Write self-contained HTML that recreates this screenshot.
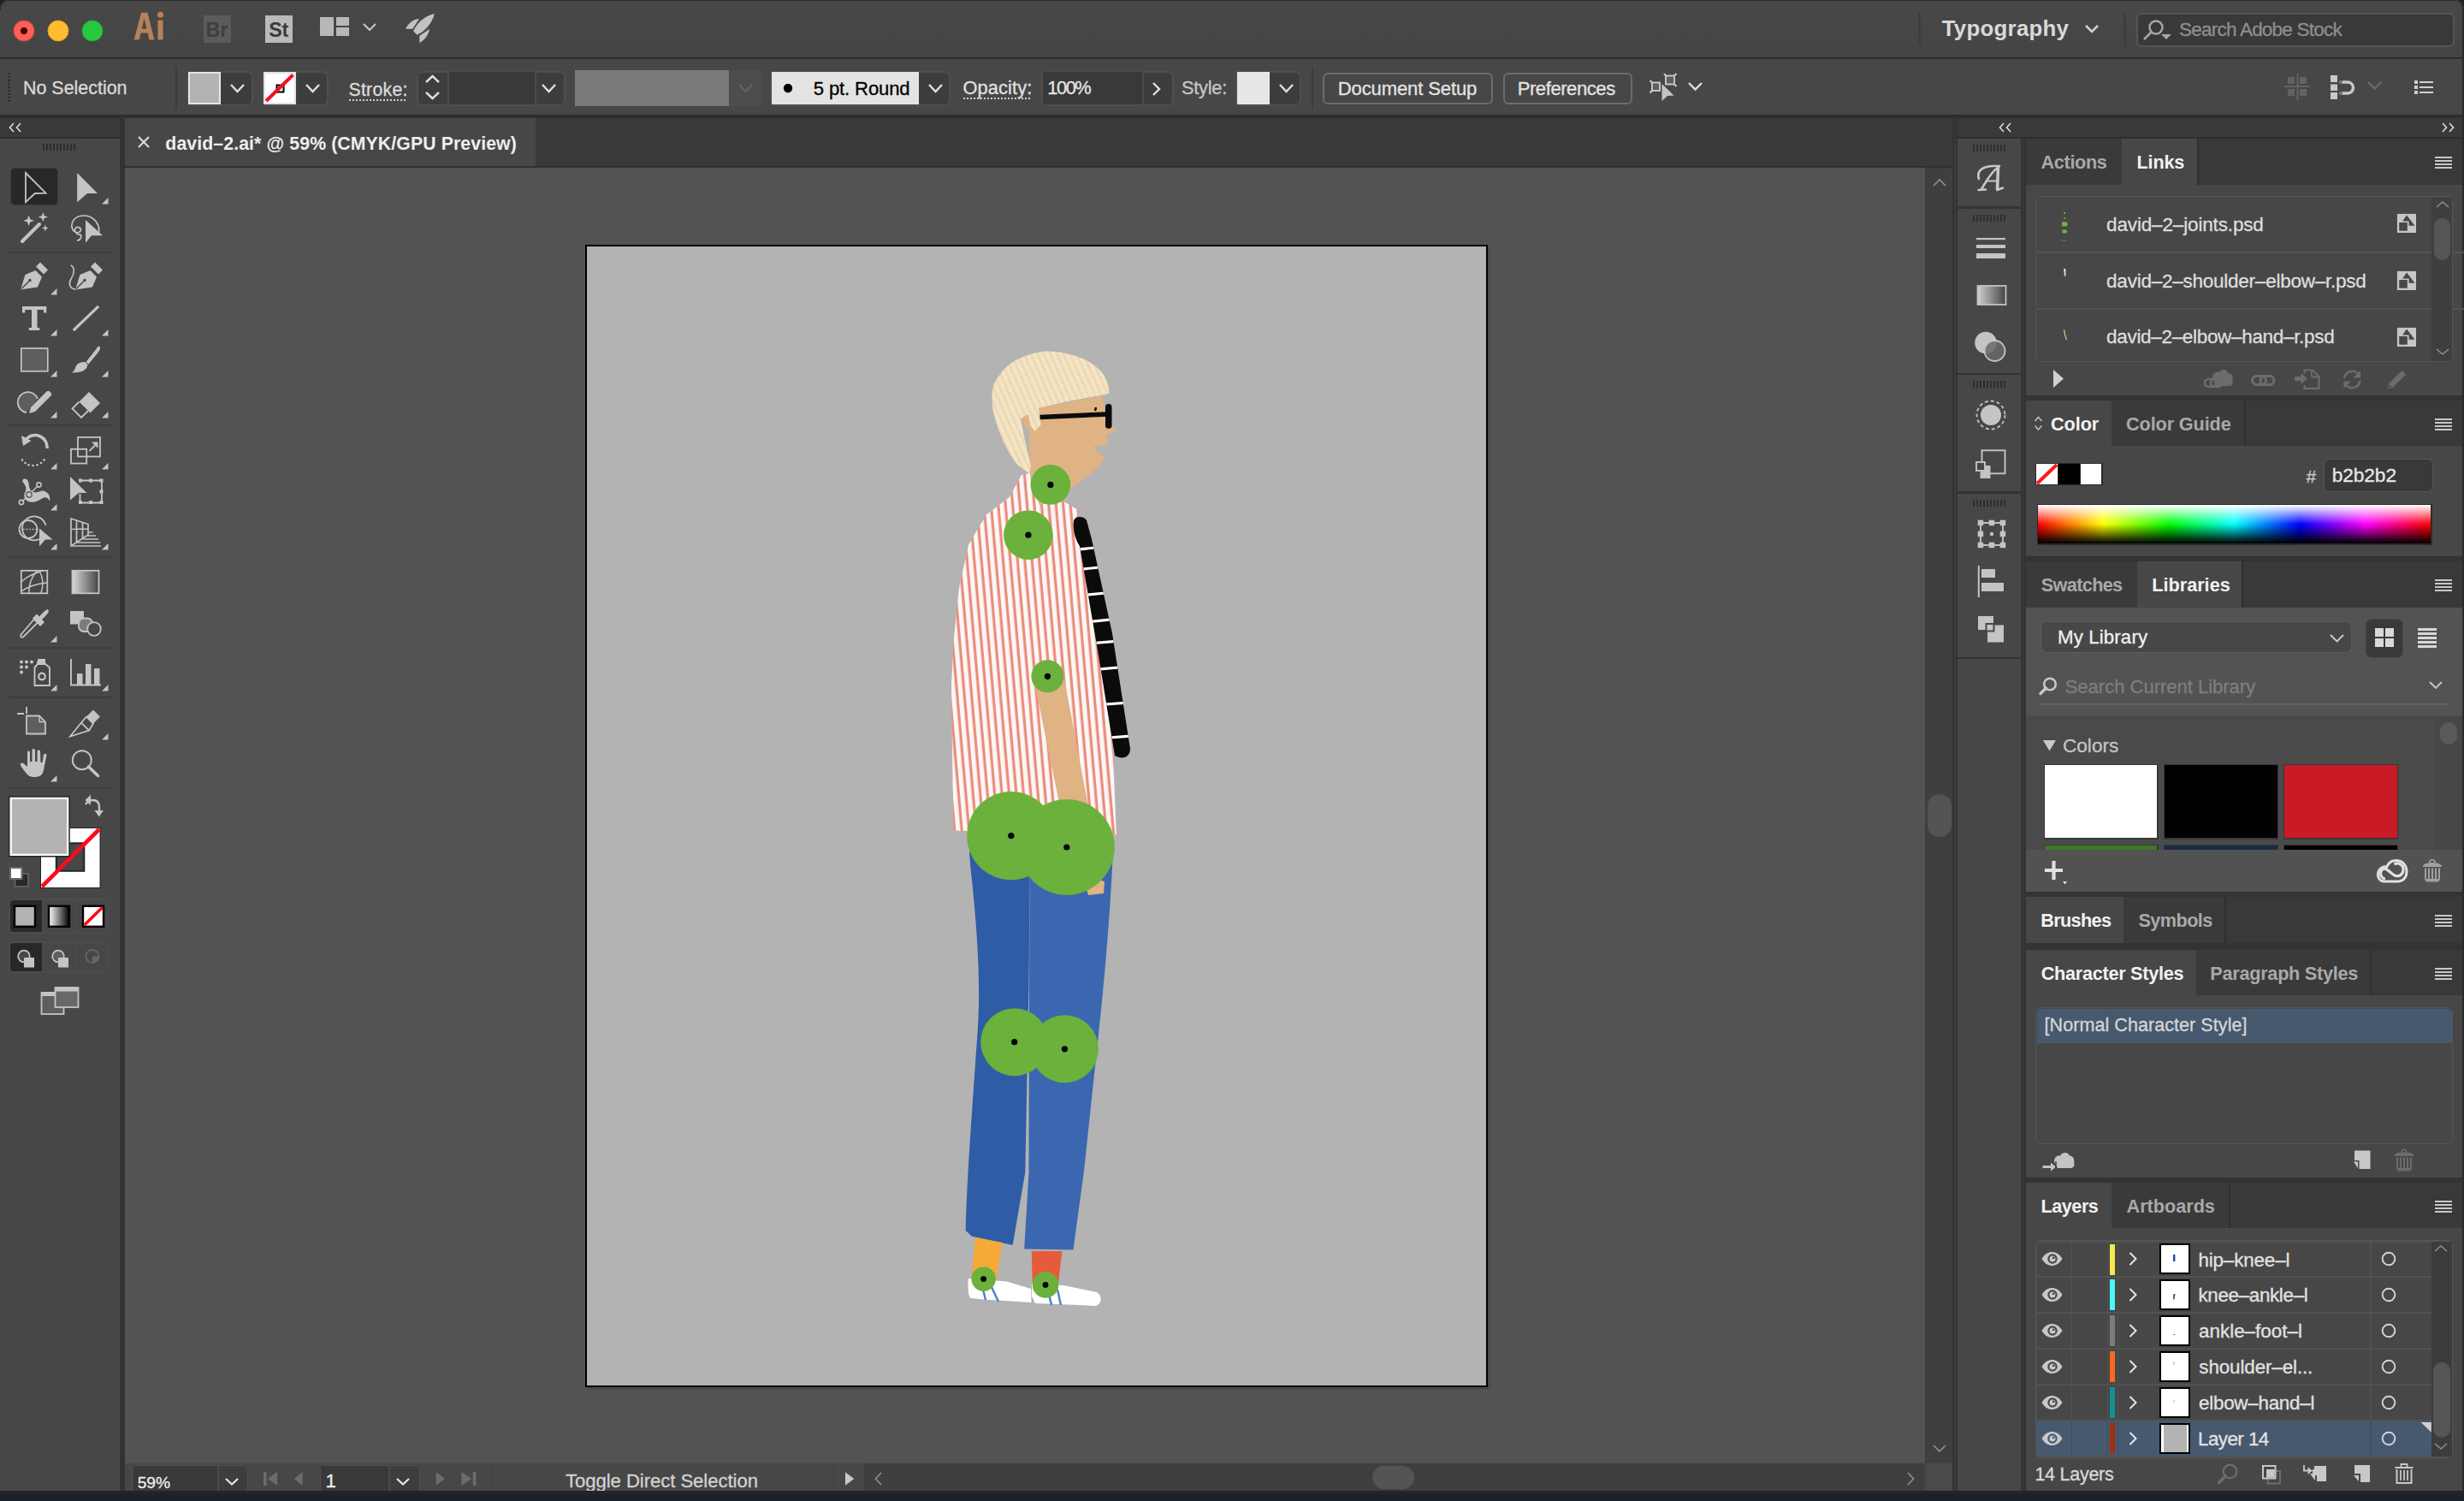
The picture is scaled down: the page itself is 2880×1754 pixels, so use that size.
<!DOCTYPE html>
<html><head><meta charset="utf-8">
<style>
*{margin:0;padding:0;box-sizing:border-box}
html,body{width:2880px;height:1754px;overflow:hidden;background:#1b222b}
body{position:relative;font-family:"Liberation Sans",sans-serif;color:#d6d6d6}
.a{position:absolute}
.t{position:absolute;white-space:nowrap;line-height:1}
svg{position:absolute;overflow:visible}
</style></head><body>
<div class="a" style="left:0;top:0;width:2880px;height:1742px;background:#474747;border-radius:10px 10px 0 0;overflow:hidden"><div class="a" style="left:0px;top:0px;width:2880px;height:68px;background:linear-gradient(#484848,#444444);"></div><div class="a" style="left:0px;top:67px;width:2880px;height:2px;background:#2b2b2b;"></div><div class="a" style="left:0;top:0;width:2880px;height:12px;border-top:1.5px solid #2a2a2a;border-left:1.5px solid #2a2a2a;border-right:2px solid #2a2a2a;border-radius:10px 10px 0 0"></div><svg style="left:0px;top:0px;" width="130" height="68" viewBox="0 0 130 68"><circle cx="28" cy="36" r="12" fill="#fd5f58" stroke="#e0443e" stroke-width="1"/><circle cx="28" cy="36" r="4" fill="#4d0202"/><circle cx="68" cy="36" r="12" fill="#febc2e" stroke="#dea123" stroke-width="1"/><circle cx="108" cy="36" r="12" fill="#2ac840" stroke="#1eab2e" stroke-width="1"/></svg><svg style="left:150px;top:10px;" width="50" height="40" viewBox="0 0 50 40"><path fill-rule="evenodd" fill="#b7815b" d="M6.7 36.4 L15 4.8 L22.5 4.8 L30.4 36.4 L24.5 36.4 L22.6 28.6 L14.6 28.6 L12.6 36.4 Z M15.8 23.6 L21.4 23.6 L18.6 11.5 Z"/><rect x="34.5" y="13.5" width="6" height="22.9" fill="#b7815b"/><circle cx="37.5" cy="7.3" r="3.5" fill="#b7815b"/></svg><div class="a" style="left:238px;top:18px;width:32px;height:32px;background:#5b5b5b;"></div><div class="t" style="left:240.5px;top:24.1px;font-size:23.26px;font-weight:700;color:#3e3e3e;letter-spacing:0.02px;">Br</div><div class="a" style="left:310px;top:18px;width:32px;height:32px;background:#bababa;"></div><div class="t" style="left:314.3px;top:24.1px;font-size:23.26px;font-weight:700;color:#3a3a3a;letter-spacing:-0.33px;">St</div><svg style="left:374px;top:20px;" width="70" height="24" viewBox="0 0 70 24"><rect x="0" y="0" width="16" height="22" fill="#b8b8b8"/><rect x="19" y="0" width="15" height="10" fill="#b8b8b8"/><rect x="19" y="12" width="15" height="10" fill="#b8b8b8"/><path d="M51 8 L58 15 L65 8" fill="none" stroke="#c8c8c8" stroke-width="2"/></svg><svg style="left:465px;top:10px;" width="50" height="45" viewBox="0 0 50 45"><g fill="#c2c2c2"><path d="M42.85 6.08 C33 8.5 24 14 18.2 26.2 L22.4 30.7 C31 27 40 18 42.85 6.08 Z"/><path d="M9 23.7 C13 16 19 12.3 25 12 L17.3 23.7 Z"/><path d="M25.3 40 L25.3 31.7 L37.1 24 C36 31 31 37 25.3 40 Z"/></g></svg><div class="a" style="left:2242px;top:15px;width:3px;height:39px;background:#3d3d3d;"></div><div class="a" style="left:2482px;top:15px;width:3px;height:39px;background:#3d3d3d;"></div><div class="t" style="left:2269.7px;top:20.9px;font-size:25.87px;font-weight:700;color:#d9d9d9;letter-spacing:0.25px;">Typography</div><svg style="left:2436px;top:28px;" width="18" height="14" viewBox="0 0 18 14"><path d="M2 2 L9 9 L16 2" fill="none" stroke="#d0d0d0" stroke-width="2.6"/></svg><div class="a" style="left:2497px;top:15px;width:372px;height:40px;background:#393939;border:2px solid #555;border-radius:6px"></div><svg style="left:2504px;top:22px;" width="36" height="28" viewBox="0 0 36 28"><circle cx="16" cy="10" r="7.5" fill="none" stroke="#a8a8a8" stroke-width="2.4"/><path d="M10.5 15.5 L2 24" stroke="#a8a8a8" stroke-width="2.6"/><path d="M22 18 L34 18 L28 24Z" fill="#a8a8a8"/></svg><div class="t" style="left:2547.0px;top:23.7px;font-size:22.53px;font-weight:400;color:#8e8e8e;letter-spacing:-0.78px;-webkit-text-stroke:0.3px #8e8e8e;">Search Adobe Stock</div><div class="a" style="left:0px;top:69px;width:2880px;height:66px;background:#474747;"></div><div class="a" style="left:0px;top:134px;width:2880px;height:2px;background:#2c2c2c;"></div><div class="a" style="left:9px;top:85px;width:3px;height:36px;background:repeating-linear-gradient(#2f2f2f 0 2px,transparent 2px 4px)"></div><div class="t" style="left:27.0px;top:92.6px;font-size:21.51px;font-weight:400;color:#d9d9d9;letter-spacing:-0.03px;-webkit-text-stroke:0.3px #d9d9d9;">No Selection</div><div class="a" style="left:205px;top:78px;width:2px;height:50px;background:#3c3c3c;"></div><div class="a" style="left:218px;top:82.5px;width:78px;height:41.0px;background:#3d3d3d;border:2px solid #4f4f4f;border-radius:7px"></div><div class="a" style="left:219.8px;top:83.8px;width:38.4px;height:38.3px;background:#e6e6e6;"></div><div class="a" style="left:222px;top:86px;width:34px;height:34px;background:#b3b3b3;"></div><svg style="left:267.5px;top:97.0px;" width="19" height="12" viewBox="0 0 19 12"><path d="M2 2 L9.5 10 L17 2" fill="none" stroke="#e0e0e0" stroke-width="2.4"/></svg><div class="a" style="left:306px;top:82.5px;width:78px;height:41.0px;background:#3d3d3d;border:2px solid #4f4f4f;border-radius:7px"></div><div class="a" style="left:307.8px;top:83.8px;width:38.4px;height:38.3px;background:#e2e2e2;"></div><div class="a" style="left:309.8px;top:85.8px;width:34.4px;height:34.3px;background:#ffffff;"></div><svg style="left:307px;top:83px;" width="40" height="40" viewBox="0 0 40 40"><rect x="16.5" y="16.5" width="8" height="8" fill="none" stroke="#000" stroke-width="2"/><path d="M4 35 L35.5 4.5" stroke="#f5101e" stroke-width="4"/></svg><svg style="left:355.5px;top:97.0px;" width="19" height="12" viewBox="0 0 19 12"><path d="M2 2 L9.5 10 L17 2" fill="none" stroke="#e0e0e0" stroke-width="2.4"/></svg><div class="t" style="left:407.5px;top:93.8px;font-size:21.22px;font-weight:400;color:#dcdcdc;letter-spacing:0.28px;-webkit-text-stroke:0.3px #dcdcdc;">Stroke:</div><div class="a" style="left:408px;top:116px;width:68px;height:2px;background:repeating-linear-gradient(90deg,#cfcfcf 0 2px,transparent 2px 4px)"></div><div class="a" style="left:487px;top:82.5px;width:174px;height:41.0px;background:#3d3d3d;border:2px solid #4f4f4f;border-radius:7px"></div><div class="a" style="left:523px;top:84px;width:2px;height:38px;background:#4b4b4b;"></div><div class="a" style="left:525px;top:84px;width:100px;height:38px;background:#393939;"></div><div class="a" style="left:625px;top:84px;width:2px;height:38px;background:#4b4b4b;"></div><svg style="left:496px;top:106px;" width="20" height="12" viewBox="0 0 20 12"><path d="M2 2 L9.5 9 L17 2" fill="none" stroke="#e0e0e0" stroke-width="2.4"/></svg><svg style="left:496px;top:86px;" width="20" height="12" viewBox="0 0 20 12"><rect width="20" height="12" fill="#3d3d3d"/><path d="M2 10 L9.5 3 L17 10" fill="none" stroke="#e0e0e0" stroke-width="2.4"/></svg><svg style="left:631.5px;top:97.0px;" width="19" height="12" viewBox="0 0 19 12"><path d="M2 2 L9.5 10 L17 2" fill="none" stroke="#e0e0e0" stroke-width="2.4"/></svg><div class="a" style="left:672px;top:82px;width:180px;height:42px;background:#7a7a7a;"></div><div class="a" style="left:840px;top:82px;width:50px;height:42px;background:#4d4d4d;border-radius:0 7px 7px 0"></div><div class="a" style="left:840px;top:82px;width:12px;height:42px;background:#7a7a7a;"></div><svg style="left:861.5px;top:97.0px;" width="19" height="12" viewBox="0 0 19 12"><path d="M2 2 L9.5 10 L17 2" fill="none" stroke="#626262" stroke-width="2.4"/></svg><div class="a" style="left:900px;top:82.5px;width:211px;height:41.0px;background:#3d3d3d;border:2px solid #4f4f4f;border-radius:7px"></div><div class="a" style="left:902px;top:84px;width:172px;height:38px;background:#e3e3e3;"></div><svg style="left:914px;top:96px;" width="14" height="14" viewBox="0 0 14 14"><circle cx="7" cy="7" r="5.2" fill="#000"/></svg><div class="t" style="left:950.8px;top:93.3px;font-size:22.09px;font-weight:400;color:#000;letter-spacing:-0.13px;-webkit-text-stroke:0.3px #000;">5 pt. Round</div><svg style="left:1083.5px;top:97.0px;" width="19" height="12" viewBox="0 0 19 12"><path d="M2 2 L9.5 10 L17 2" fill="none" stroke="#e0e0e0" stroke-width="2.4"/></svg><div class="t" style="left:1125.4px;top:92.1px;font-size:21.80px;font-weight:400;color:#e0e0e0;letter-spacing:0.15px;-webkit-text-stroke:0.3px #e0e0e0;">Opacity:</div><div class="a" style="left:1126px;top:114px;width:79px;height:2px;background:repeating-linear-gradient(90deg,#cfcfcf 0 2px,transparent 2px 4px)"></div><div class="a" style="left:1217px;top:82.5px;width:155px;height:41.0px;background:#3d3d3d;border:2px solid #4f4f4f;border-radius:7px"></div><div class="a" style="left:1219px;top:84px;width:116px;height:38px;background:#393939;"></div><div class="a" style="left:1335px;top:84px;width:2px;height:38px;background:#4b4b4b;"></div><svg style="left:1345px;top:95px;" width="14" height="18" viewBox="0 0 14 18"><path d="M3 2 L10 9 L3 16" fill="none" stroke="#e0e0e0" stroke-width="2.4"/></svg><div class="t" style="left:1224.3px;top:92.3px;font-size:21.80px;font-weight:400;color:#e6e6e6;letter-spacing:-1.44px;-webkit-text-stroke:0.3px #e6e6e6;">100%</div><div class="t" style="left:1381.0px;top:92.3px;font-size:21.80px;font-weight:400;color:#c6c6c6;letter-spacing:-0.25px;-webkit-text-stroke:0.3px #c6c6c6;">Style:</div><div class="a" style="left:1444px;top:82.5px;width:77px;height:41.0px;background:#3d3d3d;border:2px solid #4f4f4f;border-radius:7px"></div><div class="a" style="left:1445.7px;top:84px;width:38.3px;height:38px;background:#e6e6e6;"></div><svg style="left:1493.5px;top:97.0px;" width="19" height="12" viewBox="0 0 19 12"><path d="M2 2 L9.5 10 L17 2" fill="none" stroke="#e0e0e0" stroke-width="2.4"/></svg><div class="a" style="left:1533px;top:78px;width:2px;height:50px;background:#3c3c3c;"></div><div class="a" style="left:1546px;top:84.5px;width:199px;height:37px;border:2px solid #6c6c6c;border-radius:6px"></div><div class="t" style="left:1563.7px;top:92.6px;font-size:22.09px;font-weight:400;color:#e3e3e3;letter-spacing:-0.14px;-webkit-text-stroke:0.3px #e3e3e3;">Document Setup</div><div class="a" style="left:1756.5px;top:84.5px;width:151px;height:37px;border:2px solid #6c6c6c;border-radius:6px"></div><div class="t" style="left:1773.7px;top:92.6px;font-size:22.09px;font-weight:400;color:#e3e3e3;letter-spacing:-0.45px;-webkit-text-stroke:0.3px #e3e3e3;">Preferences</div><svg style="left:1926px;top:85px;" width="36" height="36" viewBox="0 0 36 36"><g fill="#5e5e5e" stroke="#cfcfcf" stroke-width="1.8"><rect x="5" y="11.5" width="9" height="9.5"/><rect x="21" y="3.5" width="10" height="10"/></g>
<path d="M2.5 9 L5 11.5 M2.5 23.5 L5 21 M19 1 L21 3.5 M33.5 1 L31 3.5 M33.5 16 L31 13.5" stroke="#cfcfcf" stroke-width="2"/>
<path d="M16 12 L31.5 27 L23 27.5 L16 34 Z" fill="#c4c4c4" stroke="#474747" stroke-width="1"/></svg><svg style="left:1971.5px;top:95.45px;" width="19" height="11.5" viewBox="0 0 19 11.5"><path d="M2 2 L9.5 9.5 L17 2" fill="none" stroke="#e0e0e0" stroke-width="2.4"/></svg><svg style="left:2668px;top:85px;" width="34" height="34" viewBox="0 0 34 34"><g fill="#636363"><rect x="6" y="5" width="8" height="8"/><rect x="20" y="5" width="8" height="8"/><rect x="6" y="19" width="8" height="8"/><rect x="20" y="19" width="8" height="8"/><rect x="16.5" y="1" width="2" height="31"/><rect x="2" y="15" width="30" height="2"/></g></svg><svg style="left:2722px;top:86px;" width="34" height="32" viewBox="0 0 34 32"><g fill="#c8c8c8"><rect x="2" y="2" width="8" height="8"/><rect x="2" y="12.5" width="8" height="7.5"/><rect x="2" y="22" width="8" height="8"/></g><path d="M15 10 L22 10 A6.5 6.5 0 0 1 22 23 L15 23" fill="none" stroke="#c8c8c8" stroke-width="3.4"/><rect x="12" y="8.3" width="4" height="3.4" fill="#7a7a7a"/><rect x="12" y="21.3" width="4" height="3.4" fill="#7a7a7a"/></svg><svg style="left:2765.5px;top:94.25px;" width="19" height="11.5" viewBox="0 0 19 11.5"><path d="M2 2 L9.5 9.5 L17 2" fill="none" stroke="#6a6a6a" stroke-width="2.4"/></svg><svg style="left:2820px;top:92px;" width="28" height="24" viewBox="0 0 28 24"><g fill="#d0d0d0"><rect x="2" y="2" width="4" height="4"/><rect x="2" y="8" width="4" height="4"/><rect x="2" y="14" width="4" height="4"/><rect x="8" y="3" width="16" height="2"/><rect x="8" y="9" width="16" height="2"/><rect x="8" y="15" width="16" height="2"/></g></svg><div class="a" style="left:0px;top:136px;width:140px;height:2px;background:#2e2e2e;"></div><div class="a" style="left:0px;top:138px;width:140px;height:22px;background:#393939;"></div><div class="a" style="left:0px;top:160px;width:140px;height:2px;background:#2e2e2e;"></div><svg style="left:10px;top:143px;" width="16" height="12" viewBox="0 0 16 12"><path d="M6 1 L1.5 6 L6 11 M14 1 L9.5 6 L14 11" fill="none" stroke="#dcdcdc" stroke-width="1.6"/></svg><div class="a" style="left:0px;top:162px;width:140px;height:1580px;background:#474747;"></div><div class="a" style="left:50px;top:168px;width:40px;height:8px;background:repeating-linear-gradient(90deg,#2e2e2e 0 2px,transparent 2px 4px)"></div><div class="a" style="left:140px;top:136px;width:6px;height:1606px;background:#333333;"></div><div class="a" style="left:12px;top:196px;width:56px;height:44px;background:#282828;border:1px solid #3b3b3b;border-radius:5px"></div><svg style="left:0px;top:190px;" width="140" height="60" viewBox="0 0 140 60"><path d="M30 12 L53.5 35.7 L40.8 36 L30 46.2 Z" fill="none" stroke="#c4c4c4" stroke-width="1.8" stroke-linejoin="miter"/><path d="M90.2 12 L114 36 L102 36 L90.2 46.2 Z" fill="#c4c4c4"/></svg><svg style="left:119px;top:231px;" width="8" height="8" viewBox="0 0 8 8"><path d="M7.5 0 L7.5 7.5 L0 7.5 Z" fill="#c4c4c4"/></svg><svg style="left:0px;top:245px;" width="140" height="45" viewBox="0 0 140 45"><path d="M26 37 L46 17" stroke="#c4c4c4" stroke-width="4" stroke-linecap="round"/>
<path d="M33.6 6.5 L35.3 11.2 L40 12.8 L35.3 14.5 L33.6 19 L31.9 14.5 L27.2 12.8 L31.9 11.2Z" fill="#c4c4c4"/>
<path d="M50.3 3 L51.8 7.2 L56 8.6 L51.8 10 L50.3 14 L48.8 10 L44.6 8.6 L48.8 7.2Z" fill="#c4c4c4"/>
<path d="M52.9 17.5 L53.9 20.5 L56.9 21.6 L53.9 22.6 L52.9 25.5 L51.9 22.6 L48.9 21.6 L51.9 20.5Z" fill="#c4c4c4"/>
<path d="M100 12 L120 30.3 L107 30.3 L100 38.7Z" fill="#c4c4c4"/>
<path d="M115 28 C118 18 110 7 98 7 C88 7 82 14 84.5 22 C86 27 92 28 94 25 C96 21 90 19 88 22 C86 26 91 30 94 29 C96 31 94 36 90 36" fill="none" stroke="#c4c4c4" stroke-width="1.7"/></svg><div class="a" style="left:10px;top:294px;width:120px;height:2px;background:#3d3d3d;"></div><svg style="left:0px;top:300px;" width="140" height="50" viewBox="0 0 140 50"><g fill="#c4c4c4"><path d="M24 38.5 L29.5 21 L41.5 16 L49 23.5 L44 35.5 Z"/><path d="M42 11.5 L47 6.5 L56 15.5 L51 20.5Z"/></g>
<path d="M25 37.5 L34 28.5" stroke="#474747" stroke-width="1.4"/><circle cx="35" cy="27.5" r="1.7" fill="#474747"/>
<g fill="#c4c4c4"><path d="M88 38.5 L93.5 21 L105.5 16 L113 23.5 L108 35.5 Z"/><path d="M106 11.5 L111 6.5 L120 15.5 L115 20.5Z"/></g>
<path d="M89 37.5 L98 28.5" stroke="#474747" stroke-width="1.4"/><circle cx="99" cy="27.5" r="1.7" fill="#474747"/>
<path d="M82.5 10 C88 12 87 20 83 26 C80 31 81 37 88 38" fill="none" stroke="#c4c4c4" stroke-width="1.6"/></svg><svg style="left:59px;top:337px;" width="8" height="8" viewBox="0 0 8 8"><path d="M7.5 0 L7.5 7.5 L0 7.5 Z" fill="#c4c4c4"/></svg><svg style="left:0px;top:350px;" width="140" height="45" viewBox="0 0 140 45"><path d="M26 8 L54.3 8 L54.3 15.5 L51 15.5 L51 12 L43.5 12 L43.5 33 L46.2 33 L46.2 36 L33.8 36 L33.8 33 L37 33 L37 12 L29.3 12 L29.3 15.5 L26 15.5 Z" fill="#c4c4c4"/>
<path d="M87 35 L114 9" stroke="#c4c4c4" stroke-width="3.2" stroke-linecap="square"/></svg><svg style="left:59px;top:385px;" width="8" height="8" viewBox="0 0 8 8"><path d="M7.5 0 L7.5 7.5 L0 7.5 Z" fill="#c4c4c4"/></svg><svg style="left:119px;top:385px;" width="8" height="8" viewBox="0 0 8 8"><path d="M7.5 0 L7.5 7.5 L0 7.5 Z" fill="#c4c4c4"/></svg><svg style="left:0px;top:400px;" width="140" height="45" viewBox="0 0 140 45"><rect x="24.8" y="7" width="31" height="26.8" fill="#5e5e5e" stroke="#c4c4c4" stroke-width="1.7"/>
<path d="M116 4.8 C118 5.5 117 9 115 11.5 L103.5 25.5 L100.5 23 L112 8.5 C113.5 6 114.5 4.5 116 4.8Z" fill="#c4c4c4"/>
<path d="M99.5 23 L102.5 25.8 C102 32 96 36 84 35.5 C88 33 87.5 29 90 26 C92.5 23.5 96 22.5 99.5 23Z" fill="#c4c4c4"/></svg><svg style="left:59px;top:433px;" width="8" height="8" viewBox="0 0 8 8"><path d="M7.5 0 L7.5 7.5 L0 7.5 Z" fill="#c4c4c4"/></svg><svg style="left:119px;top:433px;" width="8" height="8" viewBox="0 0 8 8"><path d="M7.5 0 L7.5 7.5 L0 7.5 Z" fill="#c4c4c4"/></svg><svg style="left:0px;top:448px;" width="140" height="45" viewBox="0 0 140 45"><path d="M31 34 A12 12 0 1 1 44 18" fill="#5e5e5e" stroke="#c4c4c4" stroke-width="1.8"/>
<path d="M58.5 10 C60 11 61 13 59.5 14.5 L41 33 L34 35 L36 28 L54.5 9.5 C56 8 57.5 9 58.5 10Z" fill="#c4c4c4"/>
<path d="M104 10 L117 23 L105.5 34.5 L92.5 21.5 Z" fill="#c4c4c4"/>
<path d="M92.5 21.5 L84.5 29.5 L95 40 L103 32" fill="none" stroke="#c4c4c4" stroke-width="1.8"/></svg><svg style="left:59px;top:481px;" width="8" height="8" viewBox="0 0 8 8"><path d="M7.5 0 L7.5 7.5 L0 7.5 Z" fill="#c4c4c4"/></svg><svg style="left:119px;top:481px;" width="8" height="8" viewBox="0 0 8 8"><path d="M7.5 0 L7.5 7.5 L0 7.5 Z" fill="#c4c4c4"/></svg><div class="a" style="left:10px;top:495.5px;width:120px;height:2px;background:#3d3d3d;"></div><svg style="left:0px;top:500px;" width="140" height="48" viewBox="0 0 140 48"><path d="M30 14 A14 14 0 0 1 55 24" fill="none" stroke="#c4c4c4" stroke-width="3.5"/>
<path d="M25 9 L27 21 L36.5 15 Z" fill="#c4c4c4"/>
<g fill="#c4c4c4"><circle cx="26" cy="37.5" r="1.3"/><circle cx="29.5" cy="41" r="1.3"/><circle cx="33.5" cy="43.3" r="1.3"/><circle cx="38.5" cy="44" r="1.3"/><circle cx="43.5" cy="43.3" r="1.3"/><circle cx="48" cy="41" r="1.3"/><circle cx="51.5" cy="37.5" r="1.3"/></g>
<rect x="91" y="11" width="26" height="22.5" fill="none" stroke="#c4c4c4" stroke-width="1.8"/>
<rect x="83" y="24.8" width="18.2" height="16.8" fill="none" stroke="#c4c4c4" stroke-width="1.8"/>
<path d="M104.5 27 L113.5 18" stroke="#c4c4c4" stroke-width="1.8"/><path d="M107 16.5 L114.5 16.5 L114.5 24Z" fill="#c4c4c4"/></svg><svg style="left:59px;top:541px;" width="8" height="8" viewBox="0 0 8 8"><path d="M7.5 0 L7.5 7.5 L0 7.5 Z" fill="#c4c4c4"/></svg><svg style="left:119px;top:541px;" width="8" height="8" viewBox="0 0 8 8"><path d="M7.5 0 L7.5 7.5 L0 7.5 Z" fill="#c4c4c4"/></svg><svg style="left:0px;top:552px;" width="140" height="42" viewBox="0 0 140 42"><path d="M27 12 C25 8 29 6 32 9 C35 12 32 17 37 22 C43 26 47 20 52 22 C58 24 59 30 58 34 C57 30 53 28 50 30 C44 34 38 36 33 34 C28 32 27 26 30 22 C31 18 30 15 27 12Z" fill="#c4c4c4"/>
<path d="M25 35 L45.5 14.5" stroke="#c4c4c4" stroke-width="1.6"/><circle cx="25" cy="35" r="2.6" fill="#474747" stroke="#c4c4c4" stroke-width="1.6"/><circle cx="45.5" cy="14.5" r="2.6" fill="#474747" stroke="#c4c4c4" stroke-width="1.6"/><circle cx="34" cy="26" r="3.2" fill="none" stroke="#5e5e5e" stroke-width="1.4"/>
<path d="M82 5 L101.5 24 L92 24 L82 32.5Z" fill="#c4c4c4"/>
<path d="M93.5 9.5 L119 9.5 L119 35.5 L93.5 35.5 L93.5 25" fill="none" stroke="#c4c4c4" stroke-width="1.8"/>
<g fill="#c4c4c4"><rect x="92" y="7.5" width="4" height="4"/><rect x="104" y="7.5" width="4" height="4"/><rect x="116.5" y="7.5" width="4" height="4"/><rect x="116.5" y="20.5" width="4" height="4"/><rect x="116.5" y="33" width="4" height="4"/><rect x="104" y="33" width="4" height="4"/><rect x="92" y="33" width="4" height="4"/></g></svg><svg style="left:59px;top:589px;" width="8" height="8" viewBox="0 0 8 8"><path d="M7.5 0 L7.5 7.5 L0 7.5 Z" fill="#c4c4c4"/></svg><svg style="left:0px;top:600px;" width="140" height="42" viewBox="0 0 140 42"><circle cx="33" cy="18.5" r="10.5" fill="none" stroke="#c4c4c4" stroke-width="1.8"/>
<path d="M46 30 A14 14 0 1 1 53.5 14" fill="none" stroke="#c4c4c4" stroke-width="1.8"/>
<path d="M27 18.5 L44 18.5" stroke="#c4c4c4" stroke-width="1.6" stroke-dasharray="1.6 2"/>
<path d="M46 17.5 L61.5 30.5 L53 30.5 L46 38.5Z" fill="#c4c4c4"/>
<path d="M83 6 L103 12.5 L103 25 L83 38 Z M83 18.5 L103 18 M89.5 8 L89.5 33.5 M96.5 10 L96.5 29" fill="none" stroke="#c4c4c4" stroke-width="1.7"/>
<path d="M103 22 L108.5 22 M103 26 L112 26 M97 30 L115 30 M90 34 L117.5 34 M84 38 L118 38" stroke="#c4c4c4" stroke-width="1.4"/></svg><svg style="left:59px;top:635px;" width="8" height="8" viewBox="0 0 8 8"><path d="M7.5 0 L7.5 7.5 L0 7.5 Z" fill="#c4c4c4"/></svg><svg style="left:119px;top:635px;" width="8" height="8" viewBox="0 0 8 8"><path d="M7.5 0 L7.5 7.5 L0 7.5 Z" fill="#c4c4c4"/></svg><div class="a" style="left:10px;top:649.5px;width:120px;height:2px;background:#3d3d3d;"></div><svg style="left:0px;top:660px;" width="140" height="40" viewBox="0 0 140 40"><defs><linearGradient id="tg" x1="0" x2="1"><stop offset="0" stop-color="#d8d8d8"/><stop offset="1" stop-color="#444"/></linearGradient></defs>
<rect x="24.8" y="6.8" width="30.5" height="26.5" fill="none" stroke="#c4c4c4" stroke-width="1.8"/>
<path d="M25 20 C32 12 42 10 50 6.8 M25 31 C33 25 45 22 55 21 M34 33 C33 24 36 16 43 7 M48 33 C51 24 50 14 46 7" fill="none" stroke="#c4c4c4" stroke-width="1.5"/>
<rect x="84.5" y="6.8" width="31" height="26.5" fill="url(#tg)" stroke="#c4c4c4" stroke-width="1.8"/></svg><svg style="left:0px;top:705px;" width="140" height="45" viewBox="0 0 140 45"><path d="M25 36 C23 38 24.5 40.5 27 39.5 L44 22.5 L40 18.5 Z" fill="none" stroke="#c4c4c4" stroke-width="1.8"/>
<path d="M38 17.5 L43 12.5 L46 15.5 C48 13 51 10 53.5 8 C56 6 58 9 56 11.5 C54 14 51 17 49 19 L52 22 L47 27 Z" fill="#c4c4c4"/>
<rect x="82" y="9" width="16" height="15.5" fill="#c4c4c4"/>
<rect x="92" y="17.5" width="16" height="15.5" rx="6" fill="#7c7c7c" stroke="#c4c4c4" stroke-width="1.8"/>
<circle cx="110" cy="30" r="7.8" fill="#474747" stroke="#c4c4c4" stroke-width="1.8"/></svg><svg style="left:59px;top:743px;" width="8" height="8" viewBox="0 0 8 8"><path d="M7.5 0 L7.5 7.5 L0 7.5 Z" fill="#c4c4c4"/></svg><div class="a" style="left:10px;top:756px;width:120px;height:2px;background:#3d3d3d;"></div><svg style="left:0px;top:765px;" width="140" height="42" viewBox="0 0 140 42"><g fill="#c4c4c4"><circle cx="25" cy="8.5" r="2"/><circle cx="31" cy="8.5" r="2"/><circle cx="37" cy="8.5" r="2"/><circle cx="25" cy="14.5" r="2"/><circle cx="31" cy="14.5" r="2"/><circle cx="25" cy="20.5" r="2"/>
<rect x="44" y="5" width="9" height="5"/><rect x="43" y="8" width="2" height="3"/></g>
<path d="M40.5 15 L44 11 L53 11 L58 15 L58 36 L40.5 36 Z" fill="none" stroke="#c4c4c4" stroke-width="1.9"/>
<circle cx="49" cy="25.5" r="3.8" fill="none" stroke="#c4c4c4" stroke-width="2.2"/>
<path d="M83 5 L83 35.5 L118 35.5" fill="none" stroke="#c4c4c4" stroke-width="1.9"/>
<g fill="#c4c4c4"><rect x="90" y="22" width="6.5" height="13.5"/><rect x="100" y="11" width="6.5" height="24.5"/><rect x="110" y="16" width="6.5" height="19.5"/></g></svg><svg style="left:59px;top:800px;" width="8" height="8" viewBox="0 0 8 8"><path d="M7.5 0 L7.5 7.5 L0 7.5 Z" fill="#c4c4c4"/></svg><svg style="left:119px;top:800px;" width="8" height="8" viewBox="0 0 8 8"><path d="M7.5 0 L7.5 7.5 L0 7.5 Z" fill="#c4c4c4"/></svg><div class="a" style="left:10px;top:814px;width:120px;height:2px;background:#3d3d3d;"></div><svg style="left:0px;top:820px;" width="140" height="45" viewBox="0 0 140 45"><path d="M31 6 L31 14 M20 14 L28 14" stroke="#c4c4c4" stroke-width="1.8"/>
<path d="M31 16.5 L46 16.5 L53 23.5 L53 37.5 L31 37.5 Z" fill="#5e5e5e" stroke="#c4c4c4" stroke-width="1.8"/>
<path d="M46 16.5 L46 23.5 L53 23.5" fill="none" stroke="#c4c4c4" stroke-width="1.4"/>
<path d="M82 40.5 L95 24.5 L104 33.5 Z" fill="none" stroke="#c4c4c4" stroke-width="1.8"/>
<path d="M101 17.5 L109 9.5 L117 17.5 L109 25.5 Z" fill="#c4c4c4"/><path d="M95 24.5 L101 17.5 L109 25.5 L104 33.5" fill="none" stroke="#c4c4c4" stroke-width="1.8"/></svg><svg style="left:119px;top:857px;" width="8" height="8" viewBox="0 0 8 8"><path d="M7.5 0 L7.5 7.5 L0 7.5 Z" fill="#c4c4c4"/></svg><svg style="left:0px;top:870px;" width="140" height="45" viewBox="0 0 140 45"><path d="M33 36 C30 33 25 27 24 24 C23 21.5 26 20.5 28 22.5 L32 26 L32 9 C32 7 35 7 35 9 L35 20 L37.5 20 L37.5 6.5 C37.5 4.5 41 4.5 41 6.5 L41 20 L43.5 20 L43.5 8 C43.5 6 47 6 47 8 L47.5 21 L49.5 21 L51 12 C51.5 10 54.5 10.5 54.5 12.5 L51 30 C50 35 47 38 41 38 C37 38 35 37.5 33 36Z" fill="#c4c4c4"/>
<circle cx="95.8" cy="18.2" r="11" fill="none" stroke="#c4c4c4" stroke-width="1.9"/>
<path d="M103.5 26 L114.5 36.5" stroke="#c4c4c4" stroke-width="3.6" stroke-linecap="round"/></svg><svg style="left:59px;top:906px;" width="8" height="8" viewBox="0 0 8 8"><path d="M7.5 0 L7.5 7.5 L0 7.5 Z" fill="#c4c4c4"/></svg><div class="a" style="left:10px;top:920px;width:120px;height:2px;background:#3d3d3d;"></div><svg style="left:0px;top:925px;" width="140" height="120" viewBox="0 0 140 120"><rect x="47" y="42" width="70.5" height="71" fill="#262626"/>
<rect x="48" y="43" width="68.5" height="69" fill="#ffffff"/>
<rect x="65.8" y="60.3" width="32.5" height="32.5" fill="#474747" stroke="#262626" stroke-width="2"/>
<path d="M49 111 L116 44" stroke="#ff0a1a" stroke-width="4.6"/>
<rect x="10" y="5.2" width="71.8" height="71.3" fill="#262626"/>
<rect x="11.5" y="6.7" width="68.8" height="68.3" fill="#ffffff"/>
<rect x="13.8" y="9" width="64.2" height="63.7" fill="#b3b3b3"/>
<path d="M100 15 C102 11.5 104.5 10 108.5 10 C113.5 10 116 13 116 18 L116 23" fill="none" stroke="#c4c4c4" stroke-width="2.4"/>
<path d="M106 3.8 L99.5 10 L106 16 Z M110.5 22 L121 22 L115.8 29.5 Z" fill="#c4c4c4"/>
<rect x="17.5" y="96" width="15.5" height="15" fill="#2a2a2a" stroke="#6a6a6a" stroke-width="1.5"/>
<rect x="11" y="88" width="15.5" height="15" fill="#6a6a6a"/>
<rect x="13" y="90" width="11.5" height="11" fill="#fff"/></svg><div class="a" style="left:10.4px;top:1050.3px;width:117px;height:41.100000000000136px;border:2px solid #4c4c4c;border-radius:6px;overflow:hidden"><div class="a" style="left:0;top:0;width:37px;height:100%;background:#282828"></div><div class="a" style="left:37px;top:0;width:2px;height:100%;background:#4a4a4a"></div><div class="a" style="left:76px;top:0;width:2px;height:100%;background:#4a4a4a"></div></div><svg style="left:0px;top:1050px;" width="140" height="42" viewBox="0 0 140 42"><defs><linearGradient id="tg2" x1="0" x2="1"><stop offset="0" stop-color="#fff"/><stop offset="1" stop-color="#000"/></linearGradient></defs>
<rect x="17" y="8.8" width="24" height="24" fill="#b3b3b3" stroke="#000" stroke-width="2.4"/>
<rect x="57" y="8.8" width="24" height="24" fill="url(#tg2)" stroke="#000" stroke-width="2.4"/>
<rect x="97" y="8.8" width="24" height="24" fill="#fff" stroke="#000" stroke-width="2.4"/>
<path d="M98.5 31 L119.5 10.5" stroke="#ff0a1a" stroke-width="3.6"/></svg><div class="a" style="left:10.4px;top:1100.3px;width:117px;height:36.700000000000045px;border:2px solid #4c4c4c;border-radius:6px;overflow:hidden"><div class="a" style="left:0;top:0;width:37px;height:100%;background:#282828"></div><div class="a" style="left:37px;top:0;width:2px;height:100%;background:#4a4a4a"></div><div class="a" style="left:76px;top:0;width:2px;height:100%;background:#4a4a4a"></div></div><svg style="left:0px;top:1100px;" width="140" height="40" viewBox="0 0 140 40"><circle cx="28" cy="17.5" r="6.8" fill="#474747" stroke="#c4c4c4" stroke-width="1.8"/><rect x="28" y="19" width="12" height="11.5" fill="#c4c4c4"/>
<circle cx="68" cy="17.5" r="6.8" fill="#5e5e5e" stroke="#c4c4c4" stroke-width="1.8"/><rect x="68" y="19" width="12" height="11.5" fill="#c4c4c4"/>
<circle cx="108" cy="17.5" r="7.5" fill="none" stroke="#666" stroke-width="1.8"/><path d="M108 17.5 L115.5 17.5 A7.5 7.5 0 0 1 108 25 Z" fill="#666"/></svg><svg style="left:0px;top:1150px;" width="140" height="40" viewBox="0 0 140 40"><rect x="48.5" y="10" width="26" height="25" fill="#5e5e5e" stroke="#c4c4c4" stroke-width="1.8"/><rect x="48" y="9" width="27" height="5" fill="#c4c4c4"/>
<rect x="64.5" y="4" width="27" height="23" fill="#686868" stroke="#c4c4c4" stroke-width="1.8"/><rect x="64" y="3.5" width="28" height="5" fill="#c4c4c4"/></svg><div class="a" style="left:146px;top:136px;width:2136px;height:2px;background:#2e2e2e;"></div><div class="a" style="left:146px;top:138px;width:2136px;height:56px;background:#393939;"></div><div class="a" style="left:146px;top:194px;width:2136px;height:2px;background:#2f2f2f;"></div><div class="a" style="left:146px;top:138px;width:480px;height:56px;background:#474747;"></div><svg style="left:160px;top:158px;" width="16" height="16" viewBox="0 0 16 16"><path d="M2 2 L14 14 M14 2 L2 14" stroke="#e0e0e0" stroke-width="1.9"/></svg><div class="t" style="left:193.3px;top:156.6px;font-size:21.22px;font-weight:700;color:#eeeeee;letter-spacing:0.12px;">david–2.ai* @ 59% (CMYK/GPU Preview)</div><div class="a" style="left:146px;top:196px;width:2104px;height:1514px;background:#535353;"></div><div class="a" style="left:687px;top:289px;width:1055px;height:1335px;background:#4a4a4a;"></div><div class="a" style="left:684px;top:286px;width:1055px;height:1335px;background:#000;"></div><div class="a" style="left:686px;top:288px;width:1051px;height:1331px;background:#b3b3b3;"></div><div class="a" style="left:2250px;top:196px;width:32px;height:1514px;background:#3f3f3f;"></div><svg style="left:2258px;top:207px;" width="18" height="12" viewBox="0 0 18 12"><path d="M2 10 L9 3 L16 10" fill="none" stroke="#8e8e8e" stroke-width="1.7"/></svg><svg style="left:2258px;top:1687px;" width="18" height="12" viewBox="0 0 18 12"><path d="M2 2 L9 9 L16 2" fill="none" stroke="#8e8e8e" stroke-width="1.7"/></svg><div class="a" style="left:2253px;top:928px;width:28px;height:50px;background:#545454;border-radius:14px"></div><div class="a" style="left:146px;top:1710px;width:864px;height:32px;background:#474747;"></div><div class="a" style="left:1010px;top:1710px;width:1240px;height:32px;background:#3f3f3f;"></div><div class="a" style="left:2250px;top:1710px;width:32px;height:32px;background:#4a4a4a;"></div><div class="a" style="left:154px;top:1711.6px;width:136.3px;height:34px;background:#3d3d3d;border:1.5px solid #4f4f4f;border-radius:6px 6px 0 0;border-bottom:none"></div><div class="a" style="left:155.5px;top:1713px;width:99px;height:29px;background:#393939;"></div><div class="a" style="left:254.2px;top:1713px;width:1.5px;height:29px;background:#4b4b4b;"></div><div class="t" style="left:160.7px;top:1722.9px;font-size:19.19px;font-weight:400;color:#eeeeee;letter-spacing:0.00px;-webkit-text-stroke:0.3px #eeeeee;">59%</div><svg style="left:262px;top:1726px;" width="18" height="11" viewBox="0 0 18 11"><path d="M2 2 L9 8.5 L16 2" fill="none" stroke="#e6e6e6" stroke-width="2.2"/></svg><svg style="left:305px;top:1718px;" width="60" height="20" viewBox="0 0 60 20"><g fill="#6c6c6c"><rect x="3" y="2" width="3.5" height="16"/><path d="M19 2 L19 18 L8 10Z"/><path d="M48.7 2 L48.7 18 L38.8 10Z"/></g></svg><div class="a" style="left:373.7px;top:1711.6px;width:117px;height:34px;background:#3d3d3d;border:1.5px solid #4f4f4f;border-radius:6px 6px 0 0;border-bottom:none"></div><div class="a" style="left:375.2px;top:1713px;width:79px;height:29px;background:#393939;"></div><div class="a" style="left:454.2px;top:1713px;width:1.5px;height:29px;background:#4b4b4b;"></div><div class="t" style="left:380.6px;top:1720.3px;font-size:22.24px;font-weight:400;color:#eeeeee;letter-spacing:0.00px;-webkit-text-stroke:0.3px #eeeeee;">1</div><svg style="left:462px;top:1726px;" width="18" height="11" viewBox="0 0 18 11"><path d="M2 2 L9 8.5 L16 2" fill="none" stroke="#e6e6e6" stroke-width="2.2"/></svg><svg style="left:505px;top:1718px;" width="60" height="20" viewBox="0 0 60 20"><g fill="#6c6c6c"><path d="M4.6 2 L4.6 18 L14.9 10Z"/><path d="M34.5 2 L34.5 18 L46 10Z"/><rect x="47.8" y="2" width="3.5" height="16"/></g></svg><div class="a" style="left:573.5px;top:1712px;width:1.5px;height:30px;background:#3c3c3c;"></div><div class="t" style="left:661.0px;top:1720.1px;font-size:22.09px;font-weight:400;color:#d2d2d2;letter-spacing:-0.04px;-webkit-text-stroke:0.3px #d2d2d2;">Toggle Direct Selection</div><div class="a" style="left:973.5px;top:1712px;width:1.5px;height:30px;background:#3c3c3c;"></div><svg style="left:986px;top:1719px;" width="14" height="18" viewBox="0 0 14 18"><path d="M2 1.3 L12.3 9 L2 16.7Z" fill="#c8c8c8"/></svg><svg style="left:1020px;top:1719px;" width="14" height="18" viewBox="0 0 14 18"><path d="M10 2 L3.5 9 L10 16" fill="none" stroke="#8e8e8e" stroke-width="1.7"/></svg><svg style="left:2226px;top:1719px;" width="14" height="18" viewBox="0 0 14 18"><path d="M4 2 L10.5 9 L4 16" fill="none" stroke="#8e8e8e" stroke-width="1.7"/></svg><div class="a" style="left:1604px;top:1713px;width:49px;height:27px;background:#545454;border-radius:14px"></div><div class="a" style="left:2282px;top:136px;width:6px;height:1606px;background:#333333;"></div><div class="a" style="left:2284px;top:162px;width:1.5px;height:1580px;background:#3c3c3c;"></div><div class="a" style="left:2288px;top:136px;width:592px;height:2px;background:#2e2e2e;"></div><div class="a" style="left:2288px;top:138px;width:592px;height:22px;background:#393939;"></div><div class="a" style="left:2288px;top:160px;width:592px;height:2px;background:#2e2e2e;"></div><svg style="left:2336px;top:143px;" width="16" height="12" viewBox="0 0 16 12"><path d="M6 1 L1.5 6 L6 11 M14 1 L9.5 6 L14 11" fill="none" stroke="#dcdcdc" stroke-width="1.6"/></svg><svg style="left:2853px;top:143px;" width="16" height="12" viewBox="0 0 16 12"><path d="M2 1 L6.5 6 L2 11 M10 1 L14.5 6 L10 11" fill="none" stroke="#dcdcdc" stroke-width="1.6"/></svg><div class="a" style="left:2288px;top:162px;width:74px;height:1580px;background:#333333;"></div><div class="a" style="left:2288px;top:162px;width:74px;height:79px;background:#474747;"></div><div class="a" style="left:2306px;top:169px;width:38px;height:8px;background:repeating-linear-gradient(90deg,#2e2e2e 0 2px,transparent 2px 4px)"></div><div class="a" style="left:2288px;top:244px;width:74px;height:192px;background:#474747;"></div><div class="a" style="left:2306px;top:251px;width:38px;height:8px;background:repeating-linear-gradient(90deg,#2e2e2e 0 2px,transparent 2px 4px)"></div><div class="a" style="left:2288px;top:438px;width:74px;height:136px;background:#474747;"></div><div class="a" style="left:2306px;top:445px;width:38px;height:8px;background:repeating-linear-gradient(90deg,#2e2e2e 0 2px,transparent 2px 4px)"></div><div class="a" style="left:2288px;top:577px;width:74px;height:191px;background:#474747;"></div><div class="a" style="left:2306px;top:584px;width:38px;height:8px;background:repeating-linear-gradient(90deg,#2e2e2e 0 2px,transparent 2px 4px)"></div><div class="a" style="left:2288px;top:770px;width:74px;height:972px;background:#474747;"></div><div class="a" style="left:2362px;top:162px;width:5px;height:1580px;background:#333333;"></div><div class="a" style="left:2364px;top:162px;width:1.2px;height:1580px;background:#3b3b3b;"></div><svg style="left:2305px;top:185px;" width="45" height="45" viewBox="0 0 45 45"><g fill="none" stroke="#c8c8c8" stroke-linecap="round"><path d="M8 24 C5 15 12 9.5 24 9 L32 9" stroke-width="2.6"/><path d="M30 11 C22 16 16 28 11 36" stroke-width="2.6"/><path d="M30.5 10 L29.5 36" stroke-width="3.6"/><path d="M7.5 37 L16 36.5" stroke-width="2.6"/><path d="M29.5 37 L36 34.5" stroke-width="2.6"/><path d="M18 26.5 L30 26.5" stroke-width="2.2"/></g></svg><svg style="left:2305px;top:275px;" width="45" height="30" viewBox="0 0 45 30"><rect x="5" y="3" width="34" height="2.2" fill="#c4c4c4"/><rect x="5" y="11" width="34" height="4" fill="#c4c4c4"/><rect x="5" y="21" width="34" height="6" fill="#c4c4c4"/></svg><svg style="left:2305px;top:330px;" width="45" height="30" viewBox="0 0 45 30"><defs><linearGradient id="dg" x1="0" x2="1"><stop offset="0" stop-color="#d0d0d0"/><stop offset="1" stop-color="#444"/></linearGradient></defs><rect x="6.5" y="4" width="33" height="22" fill="url(#dg)" stroke="#c4c4c4" stroke-width="1.8"/></svg><svg style="left:2305px;top:385px;" width="45" height="40" viewBox="0 0 45 40"><circle cx="16" cy="15.5" r="12.8" fill="#c4c4c4"/><circle cx="26.5" cy="25" r="12" fill="#6a6a6a" fill-opacity="0.85" stroke="#c4c4c4" stroke-width="1.8"/></svg><svg style="left:2305px;top:463px;" width="45" height="45" viewBox="0 0 45 45"><circle cx="22" cy="22" r="16.5" fill="none" stroke="#c4c4c4" stroke-width="1.8" stroke-dasharray="4 3"/><circle cx="22" cy="22" r="12" fill="#c4c4c4"/></svg><svg style="left:2305px;top:522px;" width="45" height="40" viewBox="0 0 45 40"><rect x="11.5" y="4.3" width="27" height="27" fill="none" stroke="#c4c4c4" stroke-width="1.9"/><rect x="9.5" y="22" width="12" height="15" fill="#c4c4c4"/><rect x="5" y="18" width="10" height="10" fill="#474747" stroke="#c4c4c4" stroke-width="1.9"/></svg><svg style="left:2305px;top:603px;" width="45" height="40" viewBox="0 0 45 40"><rect x="10" y="8" width="26" height="26" fill="none" stroke="#c4c4c4" stroke-width="1.9"/><g fill="#c4c4c4"><rect x="6.7" y="4.7" width="6.5" height="6.5"/><rect x="19.7" y="4.7" width="6.5" height="6.5"/><rect x="32.7" y="4.7" width="6.5" height="6.5"/><rect x="6.7" y="17.7" width="6.5" height="6.5"/><rect x="32.7" y="17.7" width="6.5" height="6.5"/><rect x="6.7" y="30.7" width="6.5" height="6.5"/><rect x="19.7" y="30.7" width="6.5" height="6.5"/><rect x="32.7" y="30.7" width="6.5" height="6.5"/><circle cx="23" cy="21" r="2.2"/></g></svg><svg style="left:2305px;top:657px;" width="45" height="45" viewBox="0 0 45 45"><rect x="6.8" y="4" width="2" height="37" fill="#c4c4c4"/><rect x="11" y="8" width="16" height="10" fill="#c4c4c4"/><rect x="11" y="24" width="26" height="10" fill="#c4c4c4"/></svg><svg style="left:2305px;top:716px;" width="45" height="40" viewBox="0 0 45 40"><rect x="7" y="4" width="18" height="16" fill="#c4c4c4"/><rect x="18" y="14.5" width="19" height="20" fill="#c4c4c4"/><rect x="15.5" y="12" width="11" height="10.5" fill="#474747"/><rect x="17.5" y="14" width="7" height="6.5" fill="#c4c4c4"/></svg><div class="a" style="left:2367px;top:162px;width:513px;height:1580px;background:#333333;"></div><div class="a" style="left:2878px;top:0px;width:2px;height:1742px;background:#2a2a2a;"></div><div class="a" style="left:2367.5px;top:162px;width:510.5px;height:54px;background:#393939;"></div><div class="a" style="left:2367.5px;top:162px;width:112.5px;height:54px;background:#3a3a3a;"></div><div class="a" style="left:2480px;top:162px;width:1.5px;height:54px;background:#2f2f2f;"></div><div class="t" style="left:2385.5px;top:179.0px;font-size:21.66px;font-weight:700;color:#a9a9a9;letter-spacing:-0.34px;">Actions</div><div class="a" style="left:2480px;top:162px;width:88px;height:54px;background:#474747;"></div><div class="a" style="left:2568px;top:162px;width:1.5px;height:54px;background:#2f2f2f;"></div><div class="t" style="left:2497.6px;top:179.0px;font-size:21.66px;font-weight:700;color:#f2f2f2;letter-spacing:-0.22px;">Links</div><svg style="left:2845px;top:182px;" width="22" height="16" viewBox="0 0 22 16"><g fill="#c8c8c8"><rect x="1" y="1" width="20" height="2"/><rect x="1" y="5" width="20" height="2"/><rect x="1" y="9" width="20" height="2"/><rect x="1" y="13" width="20" height="2"/></g></svg><div class="a" style="left:2367.5px;top:216px;width:510.5px;height:246px;background:#474747;"></div><div class="a" style="left:2379px;top:229px;width:488px;height:194px;background:#474747;border:1.5px solid #555555;border-radius:6px;overflow:hidden"></div><div class="a" style="left:2380.5px;top:294px;width:2461px;height:2px;background:#535353;"></div><div class="a" style="left:2380.5px;top:359.5px;width:2461px;height:2px;background:#535353;"></div><div class="a" style="left:2842px;top:230.5px;width:23.5px;height:191px;background:#3f3f3f;"></div><svg style="left:2846px;top:233px;" width="18" height="12" viewBox="0 0 18 12"><path d="M2 9 L9 3 L16 9" fill="none" stroke="#8e8e8e" stroke-width="1.6"/></svg><svg style="left:2846px;top:405px;" width="18" height="12" viewBox="0 0 18 12"><path d="M2 3 L9 9 L16 3" fill="none" stroke="#8e8e8e" stroke-width="1.6"/></svg><div class="a" style="left:2844.5px;top:254.8px;width:19.5px;height:49px;background:#555;border-radius:10px"></div><div class="t" style="left:2462.1px;top:251.7px;font-size:22.53px;font-weight:400;color:#dedede;letter-spacing:-0.16px;-webkit-text-stroke:0.3px #dedede;">david–2–joints.psd</div><div class="t" style="left:2462.1px;top:318.1px;font-size:22.53px;font-weight:400;color:#dedede;letter-spacing:-0.25px;-webkit-text-stroke:0.3px #dedede;">david–2–shoulder–elbow–r.psd</div><div class="t" style="left:2462.1px;top:383.4px;font-size:22.53px;font-weight:400;color:#dedede;letter-spacing:-0.33px;-webkit-text-stroke:0.3px #dedede;">david–2–elbow–hand–r.psd</div><svg style="left:2400px;top:240px;" width="30" height="50" viewBox="0 0 30 50"><g fill="#6db33f"><rect x="12" y="8" width="2" height="2"/><rect x="12.5" y="14" width="1.5" height="2"/><path d="M10 19.5 L15.5 19.5 L17 22 L15.5 24.5 L10 24.5Z"/><path d="M10.5 28.5 L15 28.5 L16.5 30.5 L15 32.5 L10.5 32.5Z"/><rect x="10" y="40.5" width="1.3" height="1.3"/><rect x="13.5" y="40.5" width="1.3" height="1.3"/></g></svg><svg style="left:2408px;top:312px;" width="12" height="14" viewBox="0 0 12 14"><path d="M4 2 L6.5 2 L6.5 10 L5 11Z" fill="#f3cfc3"/></svg><svg style="left:2408px;top:383px;" width="12" height="18" viewBox="0 0 12 18"><path d="M4.5 2 L5.5 8 L7.5 14" fill="none" stroke="#e9b57a" stroke-width="1.3"/></svg><svg style="left:2801px;top:249px;" width="25" height="25" viewBox="0 0 25 25"><rect x="0.9" y="0.9" width="22.1" height="22.1" fill="#c6c6c6"/><rect x="3.2" y="11" width="9.6" height="9.7" fill="#474747"/><path d="M12 2.5 L21.5 14.7 L14.6 14.7 L14.6 9.5 L7.1 9.5 Z" fill="#474747"/></svg><svg style="left:2801px;top:315.5px;" width="25" height="25" viewBox="0 0 25 25"><rect x="0.9" y="0.9" width="22.1" height="22.1" fill="#c6c6c6"/><rect x="3.2" y="11" width="9.6" height="9.7" fill="#474747"/><path d="M12 2.5 L21.5 14.7 L14.6 14.7 L14.6 9.5 L7.1 9.5 Z" fill="#474747"/></svg><svg style="left:2801px;top:381.5px;" width="25" height="25" viewBox="0 0 25 25"><rect x="0.9" y="0.9" width="22.1" height="22.1" fill="#c6c6c6"/><rect x="3.2" y="11" width="9.6" height="9.7" fill="#474747"/><path d="M12 2.5 L21.5 14.7 L14.6 14.7 L14.6 9.5 L7.1 9.5 Z" fill="#474747"/></svg><svg style="left:2398px;top:430px;" width="18" height="26" viewBox="0 0 18 26"><path d="M2 2 L14 12.5 L2 23Z" fill="#d0d0d0"/></svg><svg style="left:2573px;top:430px;" width="42" height="26" viewBox="0 0 42 26"><path d="M13 12 C13 6 17 4 21 5 C23 1 30 1 31 6 C36 6 38 11 36 15 C38 18 36 21 33 21 L17 21 Z" fill="#6c6c6c"/><g fill="none" stroke="#6c6c6c" stroke-width="2.6"><rect x="4" y="13" width="13" height="9" rx="4.5"/><rect x="11" y="13" width="13" height="9" rx="4.5"/></g></svg><svg style="left:2630px;top:437px;" width="32" height="16" viewBox="0 0 32 16"><g fill="none" stroke="#6c6c6c" stroke-width="3"><rect x="2.5" y="2.5" width="16" height="10" rx="5"/><rect x="12" y="2.5" width="16" height="10" rx="5"/></g></svg><svg style="left:2680px;top:431px;" width="35" height="25" viewBox="0 0 35 25"><path d="M2 9 L9.5 9 L9.5 5 L17 11.5 L9.5 18 L9.5 14 L2 14Z" fill="#6c6c6c"/><path d="M13.5 5.5 L13.5 1.5 L23 1.5 L30.5 9 L30.5 23 L13.5 23 L13.5 19" fill="none" stroke="#6c6c6c" stroke-width="2.2"/><path d="M22 2 L22 9.5 L30 9.5" fill="none" stroke="#6c6c6c" stroke-width="1.8"/></svg><svg style="left:2736px;top:431px;" width="27" height="25" viewBox="0 0 27 25"><path d="M4 11 A9.5 9.5 0 0 1 20.5 6" fill="none" stroke="#6c6c6c" stroke-width="2.6"/><path d="M23 2 L23 10.5 L14.5 10.5Z" fill="#6c6c6c"/><path d="M22.5 14 A9.5 9.5 0 0 1 6 19" fill="none" stroke="#6c6c6c" stroke-width="2.6"/><path d="M3.5 23 L3.5 14.5 L12 14.5Z" fill="#6c6c6c"/></svg><svg style="left:2788px;top:431px;" width="26" height="25" viewBox="0 0 26 25"><path d="M19.5 2 L24 6.5 L8.5 22 L2.5 23.5 L4 17.5Z" fill="#6c6c6c"/><path d="M4.8 18.5 L7.5 21.2 L3.8 22.3Z" fill="#474747"/></svg><div class="a" style="left:2367.5px;top:462px;width:510.5px;height:6px;background:#333333;"></div><div class="a" style="left:2367.5px;top:468px;width:510.5px;height:53px;background:#393939;"></div><div class="a" style="left:2367.5px;top:468px;width:100.5px;height:53px;background:#474747;"></div><div class="a" style="left:2468px;top:468px;width:1.5px;height:53px;background:#2f2f2f;"></div><div class="t" style="left:2397.1px;top:485.0px;font-size:21.66px;font-weight:700;color:#f2f2f2;letter-spacing:-0.11px;">Color</div><div class="a" style="left:2468px;top:468px;width:155px;height:53px;background:#3a3a3a;"></div><div class="a" style="left:2623px;top:468px;width:1.5px;height:53px;background:#2f2f2f;"></div><div class="t" style="left:2485.1px;top:485.0px;font-size:21.66px;font-weight:700;color:#a9a9a9;letter-spacing:-0.13px;">Color Guide</div><svg style="left:2845px;top:488px;" width="22" height="16" viewBox="0 0 22 16"><g fill="#c8c8c8"><rect x="1" y="1" width="20" height="2"/><rect x="1" y="5" width="20" height="2"/><rect x="1" y="9" width="20" height="2"/><rect x="1" y="13" width="20" height="2"/></g></svg><svg style="left:2376px;top:485px;" width="14" height="20" viewBox="0 0 14 20"><path d="M2.5 7 L6.5 2.5 L10.5 7 M2.5 12.5 L6.5 17 L10.5 12.5" fill="none" stroke="#bdbdbd" stroke-width="1.6"/></svg><div class="a" style="left:2367.5px;top:521px;width:510.5px;height:129px;background:#474747;"></div><div class="a" style="left:2378.5px;top:540.6px;width:79px;height:26.4px;background:#2a2a2a;"></div><div class="a" style="left:2380px;top:542px;width:24.5px;height:23.5px;background:#ffffff;"></div><svg style="left:2380px;top:542px;" width="25" height="24" viewBox="0 0 25 24"><path d="M1 23 L24 1" stroke="#ff1a1a" stroke-width="4"/></svg><div class="a" style="left:2406px;top:542px;width:24.5px;height:23.5px;background:#000000;"></div><div class="a" style="left:2432px;top:542px;width:24px;height:23.5px;background:#ffffff;"></div><div class="t" style="left:2695.5px;top:546.4px;font-size:21.08px;font-weight:400;color:#c8c8c8;letter-spacing:0.00px;-webkit-text-stroke:0.3px #c8c8c8;">#</div><div class="a" style="left:2715.6px;top:535.5px;width:128.4px;height:39.1px;background:#393939;border:1.5px solid #585858;border-radius:6px"></div><div class="t" style="left:2725.7px;top:544.0px;font-size:22.67px;font-weight:400;color:#e8e8e8;letter-spacing:-0.06px;-webkit-text-stroke:0.3px #e8e8e8;">b2b2b2</div><div class="a" style="left:2380.7px;top:588.7px;width:462.3px;height:48.3px;background:#2a2a2a;"></div><div class="a" style="left:2382.2px;top:590.2px;width:459.3px;height:45.3px;background:linear-gradient(90deg,#ff0000 0%,#ffff00 16.7%,#00ff00 33.3%,#00ffff 50%,#0000ff 66.7%,#ff00ff 83.3%,#ff0000 100%)"></div><div class="a" style="left:2382.2px;top:590.2px;width:459.3px;height:45.3px;background:linear-gradient(180deg,rgba(255,255,255,1) 0%,rgba(255,255,255,0) 50%,rgba(0,0,0,0) 50%,rgba(0,0,0,1) 100%)"></div><div class="a" style="left:2367.5px;top:650px;width:510.5px;height:6px;background:#333333;"></div><div class="a" style="left:2367.5px;top:656px;width:510.5px;height:54px;background:#393939;"></div><div class="a" style="left:2367.5px;top:656px;width:130.0999999999999px;height:54px;background:#3a3a3a;"></div><div class="a" style="left:2497.6px;top:656px;width:1.5px;height:54px;background:#2f2f2f;"></div><div class="t" style="left:2385.8px;top:673.0px;font-size:21.66px;font-weight:700;color:#a9a9a9;letter-spacing:-0.65px;">Swatches</div><div class="a" style="left:2497.6px;top:656px;width:122.40000000000009px;height:54px;background:#474747;"></div><div class="a" style="left:2620px;top:656px;width:1.5px;height:54px;background:#2f2f2f;"></div><div class="t" style="left:2515.2px;top:673.0px;font-size:21.66px;font-weight:700;color:#f2f2f2;letter-spacing:0.01px;">Libraries</div><svg style="left:2845px;top:676px;" width="22" height="16" viewBox="0 0 22 16"><g fill="#c8c8c8"><rect x="1" y="1" width="20" height="2"/><rect x="1" y="5" width="20" height="2"/><rect x="1" y="9" width="20" height="2"/><rect x="1" y="13" width="20" height="2"/></g></svg><div class="a" style="left:2367.5px;top:710px;width:510.5px;height:127px;background:#535353;"></div><div class="a" style="left:2385px;top:726px;width:364px;height:37px;background:#474747;border:1.5px solid #5c5c5c;border-radius:8px"></div><div class="t" style="left:2405.0px;top:733.6px;font-size:22.24px;font-weight:400;color:#f0f0f0;letter-spacing:0.14px;-webkit-text-stroke:0.3px #f0f0f0;">My Library</div><svg style="left:2722px;top:740px;" width="20" height="12" viewBox="0 0 20 12"><path d="M2 2 L9.5 9.5 L17 2" fill="none" stroke="#d0d0d0" stroke-width="1.8"/></svg><div class="a" style="left:2765px;top:723px;width:43.5px;height:46px;background:#393939;border:1.5px solid #4a4a4a;border-radius:7px"></div><svg style="left:2775px;top:733px;" width="25" height="25" viewBox="0 0 25 25"><g fill="#d8d8d8"><rect x="1" y="1" width="10" height="10"/><rect x="13" y="1" width="10" height="10"/><rect x="1" y="13" width="10" height="10"/><rect x="13" y="13" width="10" height="10"/></g></svg><svg style="left:2824px;top:733px;" width="26" height="25" viewBox="0 0 26 25"><g fill="#d8d8d8"><rect x="2" y="1" width="22" height="3"/><rect x="2" y="6" width="22" height="3"/><rect x="2" y="11" width="22" height="3"/><rect x="2" y="16" width="22" height="3"/><rect x="2" y="21" width="22" height="3"/></g></svg><svg style="left:2382px;top:790px;" width="24" height="24" viewBox="0 0 24 24"><circle cx="14" cy="9.5" r="6.8" fill="none" stroke="#c8c8c8" stroke-width="2.6"/><path d="M9.5 14 L3 20.5" stroke="#c8c8c8" stroke-width="3.4" stroke-linecap="round"/></svg><div class="t" style="left:2413.7px;top:792.0px;font-size:22.09px;font-weight:400;color:#7e7e7e;letter-spacing:-0.04px;-webkit-text-stroke:0.3px #7e7e7e;">Search Current Library</div><svg style="left:2838px;top:795px;" width="20" height="12" viewBox="0 0 20 12"><path d="M2 2 L9 9 L16 2" fill="none" stroke="#c8c8c8" stroke-width="1.8"/></svg><div class="a" style="left:2384px;top:822px;width:478px;height:2px;background:#626262;"></div><div class="a" style="left:2367.5px;top:836px;width:510.5px;height:2px;background:#4a4a4a;"></div><div class="a" style="left:2367.5px;top:838px;width:510.5px;height:155px;background:#4a4a4a;"></div><div class="a" style="left:2845px;top:838px;width:33px;height:155px;background:#474747;"></div><div class="a" style="left:2852px;top:844px;width:20px;height:26px;background:#5a5a5a;border-radius:10px"></div><svg style="left:2386px;top:863px;" width="20" height="18" viewBox="0 0 20 18"><path d="M2 2 L17 2 L9.5 14.5Z" fill="#c8c8c8"/></svg><div class="t" style="left:2410.9px;top:859.6px;font-size:22.67px;font-weight:400;color:#c4c4c4;letter-spacing:0.00px;-webkit-text-stroke:0.3px #c4c4c4;">Colors</div><div class="a" style="left:2388.8px;top:892.6px;width:134.19999999999982px;height:88.4px;background:#383838;"></div><div class="a" style="left:2390.3px;top:894.1px;width:131.19999999999982px;height:85.4px;background:#ffffff;"></div><div class="a" style="left:2528.6px;top:892.6px;width:134.80000000000018px;height:88.4px;background:#383838;"></div><div class="a" style="left:2530.1px;top:894.1px;width:131.80000000000018px;height:85.4px;background:#000000;"></div><div class="a" style="left:2668.7px;top:892.6px;width:134.60000000000036px;height:88.4px;background:#383838;"></div><div class="a" style="left:2670.2px;top:894.1px;width:131.60000000000036px;height:85.4px;background:#c91a26;"></div><div class="a" style="left:2388.8px;top:986.6px;width:134.19999999999982px;height:6.4px;background:#383838;"></div><div class="a" style="left:2390.3px;top:988.1px;width:131.19999999999982px;height:4.9px;background:#3a7a27;"></div><div class="a" style="left:2528.6px;top:986.6px;width:134.80000000000018px;height:6.4px;background:#383838;"></div><div class="a" style="left:2530.1px;top:988.1px;width:131.80000000000018px;height:4.9px;background:#1a2a45;"></div><div class="a" style="left:2668.7px;top:986.6px;width:134.60000000000036px;height:6.4px;background:#383838;"></div><div class="a" style="left:2670.2px;top:988.1px;width:131.60000000000036px;height:4.9px;background:#000000;"></div><div class="a" style="left:2367.5px;top:993px;width:510.5px;height:49px;background:#525252;"></div><svg style="left:2389px;top:1004px;" width="30" height="32" viewBox="0 0 30 32"><path d="M11.5 2 L11.5 24 M1 13 L22 13" stroke="#e0e0e0" stroke-width="4.2"/><path d="M22 26 L27 26 L24.5 29.5Z" fill="#e0e0e0"/></svg><svg style="left:2778px;top:1003px;" width="37" height="30" viewBox="0 0 37 30"><path d="M9 27 C3 27 1 22 1.5 18 C2 12 7 9.5 12 9.5 C14 5 18 2.5 22.5 2.5 C30 2.5 35 8 35 15.5 C35 22 31 27 24 27 Z" fill="none" stroke="#e0e0e0" stroke-width="3"/><path d="M13 24.5 L23 14.5" stroke="#474747" stroke-width="0"/><path d="M20.5 7 C25 4.5 31 7 31 13.5 C31 19.5 25.5 22 21 20 C17.5 18.5 14.5 14.5 11 12.5 C8 11 4.5 13.5 4.5 17.5 C4.5 21 7 24 10 24" fill="none" stroke="#e0e0e0" stroke-width="3.2"/></svg><svg style="left:2830px;top:1002px;" width="26" height="30" viewBox="0 0 26 30"><g fill="#a0a0a0"><path d="M2 9.5 C4 7 8 6 13 6 C18 6 22 7 24 9.5 L24 11 L2 11Z"/><path d="M9 6 C9 3 10.5 2 13 2 C15.5 2 17 3 17 6 L15 6 C15 4 14.5 3.8 13 3.8 C11.5 3.8 11 4 11 6Z"/><path d="M4 12.5 L6 12.5 L6 25 L8 25 L8 12.5 L10 12.5 L10 25 L12 25 L12 12.5 L14 12.5 L14 25 L16 25 L16 12.5 L18 12.5 L18 25 L20 25 L20 12.5 L22 12.5 L22 24 C22 27 20.5 28.5 18 28.5 L8 28.5 C5.5 28.5 4 27 4 24Z"/></g></svg><div class="a" style="left:2367.5px;top:1042px;width:510.5px;height:6px;background:#333333;"></div><div class="a" style="left:2367.5px;top:1048px;width:510.5px;height:53.5px;background:#393939;"></div><div class="a" style="left:2367.5px;top:1048px;width:114.5px;height:53.5px;background:#474747;"></div><div class="a" style="left:2482px;top:1048px;width:1.5px;height:53.5px;background:#2f2f2f;"></div><div class="t" style="left:2385.2px;top:1065.0px;font-size:21.66px;font-weight:700;color:#f2f2f2;letter-spacing:-0.63px;">Brushes</div><div class="a" style="left:2482px;top:1048px;width:118px;height:53.5px;background:#3a3a3a;"></div><div class="a" style="left:2600px;top:1048px;width:1.5px;height:53.5px;background:#2f2f2f;"></div><div class="t" style="left:2499.4px;top:1065.0px;font-size:21.66px;font-weight:700;color:#a9a9a9;letter-spacing:-0.55px;">Symbols</div><svg style="left:2845px;top:1068px;" width="22" height="16" viewBox="0 0 22 16"><g fill="#c8c8c8"><rect x="1" y="1" width="20" height="2"/><rect x="1" y="5" width="20" height="2"/><rect x="1" y="9" width="20" height="2"/><rect x="1" y="13" width="20" height="2"/></g></svg><div class="a" style="left:2367.5px;top:1101.5px;width:510.5px;height:8.5px;background:#333333;"></div><div class="a" style="left:2367.5px;top:1110px;width:510.5px;height:53px;background:#393939;"></div><div class="a" style="left:2367.5px;top:1110px;width:199.0px;height:53px;background:#474747;"></div><div class="a" style="left:2566.5px;top:1110px;width:1.5px;height:53px;background:#2f2f2f;"></div><div class="t" style="left:2385.7px;top:1127.0px;font-size:21.66px;font-weight:700;color:#f2f2f2;letter-spacing:-0.27px;">Character Styles</div><div class="a" style="left:2566.5px;top:1110px;width:203.5px;height:53px;background:#3a3a3a;"></div><div class="a" style="left:2770px;top:1110px;width:1.5px;height:53px;background:#2f2f2f;"></div><div class="t" style="left:2583.3px;top:1127.0px;font-size:21.66px;font-weight:700;color:#a9a9a9;letter-spacing:-0.26px;">Paragraph Styles</div><svg style="left:2845px;top:1130px;" width="22" height="16" viewBox="0 0 22 16"><g fill="#c8c8c8"><rect x="1" y="1" width="20" height="2"/><rect x="1" y="5" width="20" height="2"/><rect x="1" y="9" width="20" height="2"/><rect x="1" y="13" width="20" height="2"/></g></svg><div class="a" style="left:2367.5px;top:1163px;width:510.5px;height:213px;background:#474747;"></div><div class="a" style="left:2379px;top:1177px;width:488px;height:160px;background:#474747;border:1.5px solid #555555;border-radius:6px;overflow:hidden"></div><div class="a" style="left:2380.5px;top:1178.5px;width:485px;height:40px;background:#46596e;border-radius:5px 5px 0 0"></div><div class="t" style="left:2389.5px;top:1188.1px;font-size:21.51px;font-weight:400;color:#d6d6d6;letter-spacing:0.07px;-webkit-text-stroke:0.3px #d6d6d6;">[Normal Character Style]</div><svg style="left:2386px;top:1343px;" width="40" height="27" viewBox="0 0 40 27"><path d="M15 15 C15 9 18 7 22 7.5 C24 3 31 2.5 33 7.5 C37.5 8 39 12 38 15.5 C39.5 18 38 22 34.5 22 L19 22 Z" fill="#c4c4c4"/><path d="M1.5 19 L11 19 L11 15.5 L17 20.5 L11 25.5 L11 22 L1.5 22Z" fill="#c4c4c4"/><path d="M17 14 L17 25" stroke="#474747" stroke-width="1.6"/></svg><svg style="left:2748px;top:1343px;" width="25" height="25" viewBox="0 0 25 25"><path d="M4 1.5 L22.5 1.5 L22.5 23 L9.5 23 L9.5 13 L4 13Z" fill="#c8c8c8"/><path d="M3 14.5 L8 14.5 L8 22 Z" fill="#c8c8c8"/></svg><svg style="left:2797px;top:1341px;" width="27" height="29" viewBox="0 0 27 29"><g fill="#6c6c6c"><path d="M2 8 C4 6 8 5.5 13 5.5 C18 5.5 22 6 24 8 L24 10 L2 10Z"/><path d="M9.5 5.5 C9.5 2.5 11 1.5 13 1.5 C15 1.5 16.5 2.5 16.5 5.5 L14.8 5.5 C14.8 3.5 14 3.2 13 3.2 C12 3.2 11.2 3.5 11.2 5.5Z"/><path d="M4 11.5 L6 11.5 L6 24 L8 24 L8 11.5 L10 11.5 L10 24 L12 24 L12 11.5 L14 11.5 L14 24 L16 24 L16 11.5 L18 11.5 L18 24 L20 24 L20 11.5 L22 11.5 L22 23.5 C22 26 20.5 27.5 18 27.5 L8 27.5 C5.5 27.5 4 26 4 23.5Z"/></g></svg><div class="a" style="left:2367.5px;top:1376px;width:510.5px;height:6px;background:#333333;"></div><div class="a" style="left:2367.5px;top:1382px;width:510.5px;height:53px;background:#393939;"></div><div class="a" style="left:2367.5px;top:1382px;width:100.5px;height:53px;background:#474747;"></div><div class="a" style="left:2468px;top:1382px;width:1.5px;height:53px;background:#2f2f2f;"></div><div class="t" style="left:2385.5px;top:1399.0px;font-size:21.66px;font-weight:700;color:#f2f2f2;letter-spacing:-0.49px;">Layers</div><div class="a" style="left:2468px;top:1382px;width:137px;height:53px;background:#3a3a3a;"></div><div class="a" style="left:2605px;top:1382px;width:1.5px;height:53px;background:#2f2f2f;"></div><div class="t" style="left:2485.5px;top:1399.0px;font-size:21.66px;font-weight:700;color:#a9a9a9;letter-spacing:-0.01px;">Artboards</div><svg style="left:2845px;top:1402px;" width="22" height="16" viewBox="0 0 22 16"><g fill="#c8c8c8"><rect x="1" y="1" width="20" height="2"/><rect x="1" y="5" width="20" height="2"/><rect x="1" y="9" width="20" height="2"/><rect x="1" y="13" width="20" height="2"/></g></svg><div class="a" style="left:2367.5px;top:1435px;width:510.5px;height:307px;background:#474747;"></div><div class="a" style="left:2379px;top:1449px;width:488px;height:254.5px;background:#525252;border:1.5px solid #555555;border-radius:6px;overflow:hidden"></div><div class="a" style="left:2380.5px;top:1451.5px;width:461.5px;height:39.5px;background:#474747;"></div><div class="a" style="left:2420.5px;top:1451.5px;width:1.8px;height:39.5px;background:#525252;"></div><div class="a" style="left:2462.5px;top:1451.5px;width:1.8px;height:39.5px;background:#525252;"></div><div class="a" style="left:2474.5px;top:1451.5px;width:1.8px;height:39.5px;background:#525252;"></div><div class="a" style="left:2770px;top:1451.5px;width:1.8px;height:39.5px;background:#525252;"></div><svg style="left:2385px;top:1462px;" width="28" height="18" viewBox="0 0 28 18"><path d="M1.5 9 C5 3 9.5 1 13.5 1 C17.5 1 22 3 25.5 9 C22 15 17.5 17 13.5 17 C9.5 17 5 15 1.5 9Z" fill="#c8c8c8"/><circle cx="14" cy="9" r="4.6" fill="none" stroke="#474747" stroke-width="2.2"/><circle cx="15.2" cy="7.8" r="1.4" fill="#474747"/></svg><div class="a" style="left:2465.9px;top:1453.5px;width:6.1px;height:36px;background:#f5ea4a;"></div><svg style="left:2486px;top:1462px;" width="14" height="18" viewBox="0 0 14 18"><path d="M3.5 2 L10.5 9 L3.5 16" fill="none" stroke="#e6e6e6" stroke-width="2"/></svg><div class="a" style="left:2524px;top:1453px;width:36px;height:36px;background:#000;"></div><div class="a" style="left:2526px;top:1455px;width:32px;height:32px;background:#ffffff;"></div><div class="t" style="left:2569.4px;top:1461.6px;font-size:22.38px;font-weight:400;color:#e2e2e2;letter-spacing:-0.13px;-webkit-text-stroke:0.3px #e2e2e2;">hip–knee–l</div><svg style="left:2783px;top:1462px;" width="18" height="18" viewBox="0 0 18 18"><circle cx="9" cy="9" r="7.3" fill="none" stroke="#d6d6d6" stroke-width="1.9"/></svg><div class="a" style="left:2380.5px;top:1493.3px;width:461.5px;height:39.5px;background:#474747;"></div><div class="a" style="left:2420.5px;top:1493.3px;width:1.8px;height:39.5px;background:#525252;"></div><div class="a" style="left:2462.5px;top:1493.3px;width:1.8px;height:39.5px;background:#525252;"></div><div class="a" style="left:2474.5px;top:1493.3px;width:1.8px;height:39.5px;background:#525252;"></div><div class="a" style="left:2770px;top:1493.3px;width:1.8px;height:39.5px;background:#525252;"></div><svg style="left:2385px;top:1503.8px;" width="28" height="18" viewBox="0 0 28 18"><path d="M1.5 9 C5 3 9.5 1 13.5 1 C17.5 1 22 3 25.5 9 C22 15 17.5 17 13.5 17 C9.5 17 5 15 1.5 9Z" fill="#c8c8c8"/><circle cx="14" cy="9" r="4.6" fill="none" stroke="#474747" stroke-width="2.2"/><circle cx="15.2" cy="7.8" r="1.4" fill="#474747"/></svg><div class="a" style="left:2465.9px;top:1495.3px;width:6.1px;height:36px;background:#50f6f7;"></div><svg style="left:2486px;top:1503.8px;" width="14" height="18" viewBox="0 0 14 18"><path d="M3.5 2 L10.5 9 L3.5 16" fill="none" stroke="#e6e6e6" stroke-width="2"/></svg><div class="a" style="left:2524px;top:1494.8px;width:36px;height:36px;background:#000;"></div><div class="a" style="left:2526px;top:1496.8px;width:32px;height:32px;background:#ffffff;"></div><div class="t" style="left:2569.4px;top:1503.4px;font-size:22.38px;font-weight:400;color:#e2e2e2;letter-spacing:-0.32px;-webkit-text-stroke:0.3px #e2e2e2;">knee–ankle–l</div><svg style="left:2783px;top:1503.8px;" width="18" height="18" viewBox="0 0 18 18"><circle cx="9" cy="9" r="7.3" fill="none" stroke="#d6d6d6" stroke-width="1.9"/></svg><div class="a" style="left:2380.5px;top:1535.2px;width:461.5px;height:39.5px;background:#474747;"></div><div class="a" style="left:2420.5px;top:1535.2px;width:1.8px;height:39.5px;background:#525252;"></div><div class="a" style="left:2462.5px;top:1535.2px;width:1.8px;height:39.5px;background:#525252;"></div><div class="a" style="left:2474.5px;top:1535.2px;width:1.8px;height:39.5px;background:#525252;"></div><div class="a" style="left:2770px;top:1535.2px;width:1.8px;height:39.5px;background:#525252;"></div><svg style="left:2385px;top:1545.7px;" width="28" height="18" viewBox="0 0 28 18"><path d="M1.5 9 C5 3 9.5 1 13.5 1 C17.5 1 22 3 25.5 9 C22 15 17.5 17 13.5 17 C9.5 17 5 15 1.5 9Z" fill="#c8c8c8"/><circle cx="14" cy="9" r="4.6" fill="none" stroke="#474747" stroke-width="2.2"/><circle cx="15.2" cy="7.8" r="1.4" fill="#474747"/></svg><div class="a" style="left:2465.9px;top:1537.2px;width:6.1px;height:36px;background:#7c7c7c;"></div><svg style="left:2486px;top:1545.7px;" width="14" height="18" viewBox="0 0 14 18"><path d="M3.5 2 L10.5 9 L3.5 16" fill="none" stroke="#e6e6e6" stroke-width="2"/></svg><div class="a" style="left:2524px;top:1536.7px;width:36px;height:36px;background:#000;"></div><div class="a" style="left:2526px;top:1538.7px;width:32px;height:32px;background:#ffffff;"></div><div class="t" style="left:2570.0px;top:1545.3px;font-size:22.38px;font-weight:400;color:#e2e2e2;letter-spacing:0.02px;-webkit-text-stroke:0.3px #e2e2e2;">ankle–foot–l</div><svg style="left:2783px;top:1545.7px;" width="18" height="18" viewBox="0 0 18 18"><circle cx="9" cy="9" r="7.3" fill="none" stroke="#d6d6d6" stroke-width="1.9"/></svg><div class="a" style="left:2380.5px;top:1577.3px;width:461.5px;height:39.5px;background:#474747;"></div><div class="a" style="left:2420.5px;top:1577.3px;width:1.8px;height:39.5px;background:#525252;"></div><div class="a" style="left:2462.5px;top:1577.3px;width:1.8px;height:39.5px;background:#525252;"></div><div class="a" style="left:2474.5px;top:1577.3px;width:1.8px;height:39.5px;background:#525252;"></div><div class="a" style="left:2770px;top:1577.3px;width:1.8px;height:39.5px;background:#525252;"></div><svg style="left:2385px;top:1587.8px;" width="28" height="18" viewBox="0 0 28 18"><path d="M1.5 9 C5 3 9.5 1 13.5 1 C17.5 1 22 3 25.5 9 C22 15 17.5 17 13.5 17 C9.5 17 5 15 1.5 9Z" fill="#c8c8c8"/><circle cx="14" cy="9" r="4.6" fill="none" stroke="#474747" stroke-width="2.2"/><circle cx="15.2" cy="7.8" r="1.4" fill="#474747"/></svg><div class="a" style="left:2465.9px;top:1579.3px;width:6.1px;height:36px;background:#f56a1d;"></div><svg style="left:2486px;top:1587.8px;" width="14" height="18" viewBox="0 0 14 18"><path d="M3.5 2 L10.5 9 L3.5 16" fill="none" stroke="#e6e6e6" stroke-width="2"/></svg><div class="a" style="left:2524px;top:1578.8px;width:36px;height:36px;background:#000;"></div><div class="a" style="left:2526px;top:1580.8px;width:32px;height:32px;background:#ffffff;"></div><div class="t" style="left:2570.3px;top:1587.4px;font-size:22.38px;font-weight:400;color:#e2e2e2;letter-spacing:-0.10px;-webkit-text-stroke:0.3px #e2e2e2;">shoulder–el...</div><svg style="left:2783px;top:1587.8px;" width="18" height="18" viewBox="0 0 18 18"><circle cx="9" cy="9" r="7.3" fill="none" stroke="#d6d6d6" stroke-width="1.9"/></svg><div class="a" style="left:2380.5px;top:1619.2px;width:461.5px;height:39.5px;background:#474747;"></div><div class="a" style="left:2420.5px;top:1619.2px;width:1.8px;height:39.5px;background:#525252;"></div><div class="a" style="left:2462.5px;top:1619.2px;width:1.8px;height:39.5px;background:#525252;"></div><div class="a" style="left:2474.5px;top:1619.2px;width:1.8px;height:39.5px;background:#525252;"></div><div class="a" style="left:2770px;top:1619.2px;width:1.8px;height:39.5px;background:#525252;"></div><svg style="left:2385px;top:1629.7px;" width="28" height="18" viewBox="0 0 28 18"><path d="M1.5 9 C5 3 9.5 1 13.5 1 C17.5 1 22 3 25.5 9 C22 15 17.5 17 13.5 17 C9.5 17 5 15 1.5 9Z" fill="#c8c8c8"/><circle cx="14" cy="9" r="4.6" fill="none" stroke="#474747" stroke-width="2.2"/><circle cx="15.2" cy="7.8" r="1.4" fill="#474747"/></svg><div class="a" style="left:2465.9px;top:1621.2px;width:6.1px;height:36px;background:#16918e;"></div><svg style="left:2486px;top:1629.7px;" width="14" height="18" viewBox="0 0 14 18"><path d="M3.5 2 L10.5 9 L3.5 16" fill="none" stroke="#e6e6e6" stroke-width="2"/></svg><div class="a" style="left:2524px;top:1620.7px;width:36px;height:36px;background:#000;"></div><div class="a" style="left:2526px;top:1622.7px;width:32px;height:32px;background:#ffffff;"></div><div class="t" style="left:2570.0px;top:1629.3px;font-size:22.38px;font-weight:400;color:#e2e2e2;letter-spacing:-0.24px;-webkit-text-stroke:0.3px #e2e2e2;">elbow–hand–l</div><svg style="left:2783px;top:1629.7px;" width="18" height="18" viewBox="0 0 18 18"><circle cx="9" cy="9" r="7.3" fill="none" stroke="#d6d6d6" stroke-width="1.9"/></svg><div class="a" style="left:2380.5px;top:1661.2px;width:461.5px;height:39.5px;background:#46596e;"></div><div class="a" style="left:2420.5px;top:1661.2px;width:1.8px;height:39.5px;background:#3f4f60;"></div><div class="a" style="left:2462.5px;top:1661.2px;width:1.8px;height:39.5px;background:#3f4f60;"></div><div class="a" style="left:2474.5px;top:1661.2px;width:1.8px;height:39.5px;background:#3f4f60;"></div><div class="a" style="left:2770px;top:1661.2px;width:1.8px;height:39.5px;background:#3f4f60;"></div><svg style="left:2385px;top:1671.7px;" width="28" height="18" viewBox="0 0 28 18"><path d="M1.5 9 C5 3 9.5 1 13.5 1 C17.5 1 22 3 25.5 9 C22 15 17.5 17 13.5 17 C9.5 17 5 15 1.5 9Z" fill="#c8c8c8"/><circle cx="14" cy="9" r="4.6" fill="none" stroke="#46596e" stroke-width="2.2"/><circle cx="15.2" cy="7.8" r="1.4" fill="#46596e"/></svg><div class="a" style="left:2465.9px;top:1663.2px;width:6.1px;height:36px;background:#9b3210;"></div><svg style="left:2486px;top:1671.7px;" width="14" height="18" viewBox="0 0 14 18"><path d="M3.5 2 L10.5 9 L3.5 16" fill="none" stroke="#e6e6e6" stroke-width="2"/></svg><div class="a" style="left:2524px;top:1662.7px;width:36px;height:36px;background:#000;"></div><div class="a" style="left:2526px;top:1664.7px;width:32px;height:32px;background:#ffffff;"></div><div class="a" style="left:2528.5px;top:1664.7px;width:27px;height:32px;background:#b3b3b3;"></div><div class="t" style="left:2569.1px;top:1671.3px;font-size:22.38px;font-weight:400;color:#e2e2e2;letter-spacing:-0.56px;-webkit-text-stroke:0.3px #e2e2e2;">Layer 14</div><svg style="left:2783px;top:1671.7px;" width="18" height="18" viewBox="0 0 18 18"><circle cx="9" cy="9" r="7.3" fill="none" stroke="#d6d6d6" stroke-width="1.9"/></svg><svg style="left:2536px;top:1462px;" width="10" height="20" viewBox="0 0 10 20"><rect x="4" y="4" width="2.4" height="8" fill="#1f4fa0"/></svg><svg style="left:2536px;top:1505px;" width="10" height="20" viewBox="0 0 10 20"><path d="M4.5 7 L6.5 7 L5.5 13 L4 13Z" fill="#1f4fa0"/><rect x="4" y="13" width="1.5" height="1.2" fill="#f0a030"/></svg><svg style="left:2536px;top:1548px;" width="10" height="20" viewBox="0 0 10 20"><rect x="4.5" y="11" width="1.5" height="1" fill="#1f4fa0"/></svg><svg style="left:2536px;top:1588px;" width="10" height="20" viewBox="0 0 10 20"><rect x="4.5" y="3" width="1" height="4" fill="#f09080"/></svg><svg style="left:2536px;top:1630px;" width="10" height="20" viewBox="0 0 10 20"><rect x="4.5" y="6" width="1" height="3" fill="#e0a060"/></svg><svg style="left:2828px;top:1662px;" width="16" height="14" viewBox="0 0 16 14"><path d="M1.6 0 L13.8 0 L13.8 11.7Z" fill="#d0d0d0"/></svg><div class="a" style="left:2842px;top:1450.5px;width:23.5px;height:251.5px;background:#3c3c3c;"></div><svg style="left:2844px;top:1453px;" width="18" height="12" viewBox="0 0 18 12"><path d="M2 9 L9 3 L16 9" fill="none" stroke="#8e8e8e" stroke-width="1.6"/></svg><svg style="left:2844px;top:1684px;" width="18" height="12" viewBox="0 0 18 12"><path d="M2 3 L9 9 L16 3" fill="none" stroke="#8e8e8e" stroke-width="1.6"/></svg><div class="a" style="left:2844.2px;top:1592px;width:19.5px;height:88px;background:#555;border-radius:10px"></div><div class="t" style="left:2378.4px;top:1713.2px;font-size:21.51px;font-weight:400;color:#d8d8d8;letter-spacing:-0.26px;-webkit-text-stroke:0.3px #d8d8d8;">14 Layers</div><svg style="left:2590px;top:1709px;" width="28" height="27" viewBox="0 0 28 27"><circle cx="16.5" cy="10.5" r="7.8" fill="none" stroke="#6c6c6c" stroke-width="2.4"/><path d="M11 16 L3.5 23.5" stroke="#6c6c6c" stroke-width="3.6" stroke-linecap="round"/></svg><svg style="left:2642px;top:1710px;" width="26" height="26" viewBox="0 0 26 26"><rect x="8.5" y="9" width="14.5" height="14.5" fill="none" stroke="#6c6c6c" stroke-width="2"/><rect x="3" y="3" width="14.5" height="14.5" fill="none" stroke="#c8c8c8" stroke-width="2"/><rect x="7" y="7" width="9.5" height="9.5" fill="#c8c8c8"/></svg><svg style="left:2690px;top:1710px;" width="32" height="26" viewBox="0 0 32 26"><path d="M3 2 L3 8.5 L10 8.5" fill="none" stroke="#c8c8c8" stroke-width="1.8"/><path d="M7.5 4.5 L13 8.5 L7.5 13Z" fill="#c8c8c8"/><path d="M15 3 L29 3 L29 21 L18 21 L18 14 L13 14 L13 7 L15 7Z" fill="#c8c8c8"/><path d="M10 12 L16 12 L16 20 Z" fill="#c8c8c8"/></svg><svg style="left:2748px;top:1710px;" width="26" height="26" viewBox="0 0 26 26"><path d="M4 2 L22 2 L22 22 L11 22 L11 12 L4 12Z" fill="#c8c8c8"/><path d="M3 14 L9 14 L9 21Z" fill="#c8c8c8"/></svg><svg style="left:2798px;top:1709px;" width="26" height="27" viewBox="0 0 26 27"><path d="M1.5 6 L22.5 6" stroke="#c8c8c8" stroke-width="2"/><path d="M8.5 6 L8.5 2 L15.5 2 L15.5 6" fill="none" stroke="#c8c8c8" stroke-width="1.8"/><path d="M3.5 8 L3.5 24 L20.5 24 L20.5 8" fill="none" stroke="#c8c8c8" stroke-width="2"/><path d="M8 9 L8 21 M12 9 L12 21 M16 9 L16 21" stroke="#c8c8c8" stroke-width="1.8"/></svg></div><div class="a" style="left:0px;top:1742px;width:2880px;height:4px;background:#242424;"></div><div class="a" style="left:0;top:0;width:0;height:0"><svg style="left:0px;top:0px;" width="2880" height="1754" viewBox="0 0 2880 1754"><defs>
<pattern id="shirtp" patternUnits="userSpaceOnUse" width="8.4" height="40" patternTransform="rotate(-5)">
<rect width="8.4" height="40" fill="#fbf7f6"/><rect x="0.5" width="3.2" height="40" fill="#e8705c" opacity="0.8"/>
</pattern>
<pattern id="hairp" patternUnits="userSpaceOnUse" width="7" height="40" patternTransform="rotate(-24)">
<rect width="7" height="40" fill="#f3e4c5"/><rect x="0" width="2.6" height="40" fill="#ead5ab" opacity="0.8"/>
</pattern>
</defs>
<!-- pants -->
<path d="M1133 995 L1204 996 L1202.5 1150 L1198.3 1370 L1183.6 1455 L1136 1444.7 L1128.7 1438 C1130 1380 1136 1300 1143 1200 C1146 1150 1143 1090 1134 1010 Z" fill="#2f5ca6"/>
<path d="M1204 996 L1301 993 C1298 1060 1293 1120 1287 1180 L1266.8 1370 L1254.4 1460.6 L1197.2 1459.5 L1202.5 1370 L1203 1150 Z" fill="#3a67b0"/>
<!-- socks -->
<path d="M1140 1446 L1171.7 1452 L1164.4 1496 L1136 1492 Z" fill="#f4a938"/>
<path d="M1205.7 1462 L1241.4 1462 L1236.8 1501 L1206.8 1501 Z" fill="#e65b3c"/>
<!-- shoes -->
<path d="M1132 1494 L1176.8 1497.5 L1205 1506 L1205.5 1522 L1150 1518.5 L1134 1517 C1131 1512 1131 1500 1132 1494 Z" fill="#ffffff"/>
<path d="M1206 1500 L1243.6 1502 L1282 1510 C1288 1514 1289 1522 1281 1526 L1210 1523 L1206 1515 Z" fill="#ffffff"/>
<path d="M1148 1503 L1152 1519 M1158 1502 L1167 1521" stroke="#4a7fc6" stroke-width="2.4"/>
<path d="M1225 1508 L1229 1525 M1236 1507 L1240 1525" stroke="#4a7fc6" stroke-width="2.4"/>
<!-- shirt -->
<path d="M1194 555 L1204 553 L1215 590 L1240 584 L1261.5 596.8 L1256 608 L1271 643 L1292 720 L1298 800 L1304.8 976 L1114.3 970.6 L1112 800 L1114.4 751.9 L1120.8 688 L1132 636.7 L1152.8 601.6 L1180 580.8 Z" fill="url(#shirtp)"/>
<!-- arm -->
<path d="M1207 788 L1243 788 L1271 937 L1275 1025 L1291 1030 L1290 1044 L1272 1046 L1237 933 Z" fill="#dfb384"/>
<!-- face -->
<path d="M1214 476.7 L1288.7 462.4 L1290 472 L1293 492 L1305.5 503 L1293.5 508 L1294.7 520 L1276.7 522.3 L1291 534.3 L1287.5 541.5 L1278 551 L1251.5 571.5 L1240 584 L1215 590 L1204 553 L1203 505 L1192.8 488.7 L1202 482.7 Z" fill="#dfb384"/>
<!-- hair -->
<path d="M1218 411 C1235 409 1262 415 1278 426 C1290 435 1296 445 1296.5 460 L1284 462.4 L1248 469 L1214 476.7 L1216.7 496 L1209.5 504 L1204.8 498 L1202 484 L1193 489 L1197 510 L1204.8 544 L1203.6 553.5 L1190 544 C1178 530 1166 505 1160.4 478 C1158 460 1160 447 1167.6 439.6 C1176 426 1190 416 1218 411 Z" fill="url(#hairp)"/>
<!-- glasses -->
<path d="M1215.5 487.5 L1294.7 484" stroke="#0b0b0b" stroke-width="5.5"/>
<path d="M1280 480 L1281 476" stroke="#0b0b0b" stroke-width="2.5"/>
<rect x="1292" y="472" width="7.5" height="28.7" rx="3.5" fill="#0b0b0b"/>
<!-- tie -->
<clipPath id="tieclip"><path d="M1255 609 C1256 603 1266 602 1270 608 L1276 630 L1300 740 L1321 875 C1321 885 1312 888 1303 883 L1283 760 L1262 638 C1255 628 1254 615 1255 609 Z"/></clipPath>
<path d="M1255 609 C1256 603 1266 602 1270 608 L1276 630 L1300 740 L1321 875 C1321 885 1312 888 1303 883 L1283 760 L1262 638 C1255 628 1254 615 1255 609 Z" fill="#0b0b0b"/>
<g stroke="#ffffff" stroke-width="3.2" clip-path="url(#tieclip)">
<path d="M1250 643 L1290 639"/><path d="M1255 666 L1295 662"/><path d="M1262 696 L1302 692"/><path d="M1268 727 L1308 723"/><path d="M1273 752 L1313 748.5"/><path d="M1279 782.5 L1319 779"/><path d="M1286 823.5 L1326 820.5"/><path d="M1290 862.5 L1330 859.5"/>
</g>
<!-- joints -->
<circle cx="1227.9" cy="566.4" r="23.3" fill="#6bb13b"/><circle cx="1227.9" cy="566.4" r="3.6" fill="#000"/>
<circle cx="1201.9" cy="625.2" r="28.8" fill="#6bb13b"/><circle cx="1201.9" cy="625.2" r="3.6" fill="#000"/>
<circle cx="1224.4" cy="790.3" r="19" fill="#6bb13b"/><circle cx="1224.4" cy="790.3" r="3.6" fill="#000"/>
<circle cx="1181.8" cy="976.7" r="51.6" fill="#6bb13b"/><circle cx="1181.8" cy="976.7" r="3.6" fill="#000"/>
<circle cx="1246.8" cy="990" r="56" fill="#6bb13b"/><circle cx="1246.8" cy="990" r="3.6" fill="#000"/>
<circle cx="1185.7" cy="1217.7" r="39.5" fill="#6bb13b"/><circle cx="1185.7" cy="1217.7" r="3.6" fill="#000"/>
<circle cx="1244.4" cy="1225.8" r="39.5" fill="#6bb13b"/><circle cx="1244.4" cy="1225.8" r="3.6" fill="#000"/>
<circle cx="1149.6" cy="1494.6" r="14.2" fill="#6bb13b"/><circle cx="1149.6" cy="1494.6" r="3.4" fill="#000"/>
<circle cx="1222" cy="1501.4" r="15.3" fill="#6bb13b"/><circle cx="1222" cy="1501.4" r="3.4" fill="#000"/>
</svg></div></body></html>
